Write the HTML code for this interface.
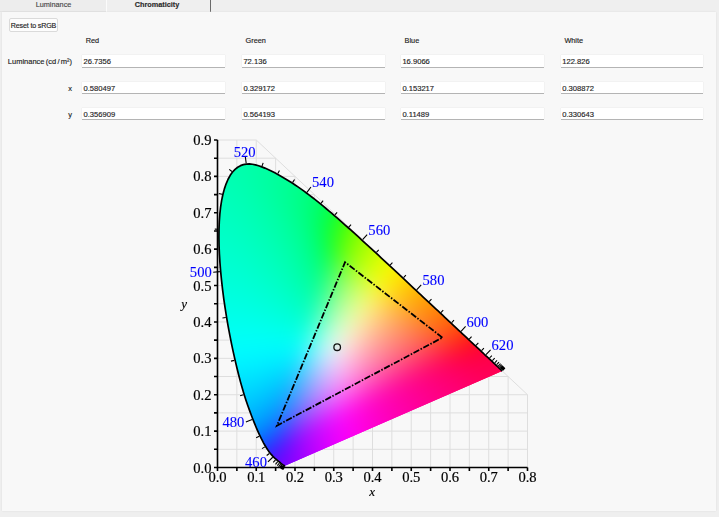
<!DOCTYPE html>
<html><head><meta charset="utf-8"><style>
html,body{margin:0;padding:0}
body{width:719px;height:517px;background:#efefef;overflow:hidden;position:relative;font-family:"Liberation Sans",sans-serif;color:#222}
.tab,.btn,.lbl,.inp,.rl{-webkit-text-stroke:0.15px currentColor}
.tabbar{position:absolute;left:0;top:0;width:719px;height:12px;background:#efefef}
.tab{position:absolute;top:0;height:11px;font-size:7.3px;line-height:10px;text-align:center;color:#4a4a4a;white-space:nowrap}
.t1{left:0;width:107px;border-bottom:1px solid #e3e3e3;background:#ededed}
.t2{left:106px;width:102px;font-weight:bold;color:#2a2a2a;height:12px;background:#efefef}
.sep{position:absolute;left:106px;top:0;width:1px;height:12px;background:#fbfbfb}
.dk{position:absolute;left:210px;top:0;width:1px;height:11.5px;background:#6a6a6a}
.panel{position:absolute;left:2px;top:12px;width:714px;height:498.6px;background:#f8f8f8;box-shadow:0 0 1.5px #d8d8d8}
.btn{position:absolute;left:9px;top:18.3px;width:47px;height:11.6px;border:1px solid #dadada;border-radius:2px;background:#fdfdfd;font-size:7.1px;line-height:14px;text-align:center;color:#1e1e1e;white-space:nowrap;letter-spacing:-0.15px}
.lbl{position:absolute;font-size:7.3px;line-height:9px;color:#1e1e1e;white-space:nowrap}
.inp{position:absolute;width:143.5px;height:11.5px;background:#fff;box-shadow:0 1px 0 #b4b4b4,0 0 1px #d4d4d4;font-size:7.6px;line-height:13.6px;text-indent:1.4px;color:#1e1e1e;white-space:nowrap}
.rl{position:absolute;font-size:7.5px;line-height:9px;color:#1e1e1e;text-align:right;width:72.1px;left:0;white-space:nowrap;word-spacing:-0.8px}
canvas{display:block}
</style></head><body>
<div class="tabbar"></div>
<div class="tab t1">Luminance</div>
<div class="tab t2">Chromaticity</div>
<div class="sep"></div>
<div class="dk"></div>
<div class="panel"></div>
<div class="btn">Reset to sRGB</div>
<div class="lbl" style="left:85.7px;top:36px">Red</div>
<div class="lbl" style="left:245.6px;top:36px">Green</div>
<div class="lbl" style="left:404.6px;top:36px">Blue</div>
<div class="lbl" style="left:564.4px;top:36px">White</div>
<div class="rl" style="top:56.5px">Luminance (cd / m&#178;)</div>
<div class="rl" style="top:83.5px">x</div>
<div class="rl" style="top:110px">y</div>
<div class="inp" style="left:82.1px;top:55.3px;width:143.4px">26.7356</div>
<div class="inp" style="left:82.1px;top:81.8px;width:143.4px">0.580497</div>
<div class="inp" style="left:82.1px;top:107.6px;width:143.4px">0.356909</div>
<div class="inp" style="left:242px;top:55.3px;width:142.5px">72.136</div>
<div class="inp" style="left:242px;top:81.8px;width:142.5px">0.329172</div>
<div class="inp" style="left:242px;top:107.6px;width:142.5px">0.564193</div>
<div class="inp" style="left:401px;top:55.3px;width:143.2px">16.9066</div>
<div class="inp" style="left:401px;top:81.8px;width:143.2px">0.153217</div>
<div class="inp" style="left:401px;top:107.6px;width:143.2px">0.11489</div>
<div class="inp" style="left:560.8px;top:55.3px;width:142.4px">122.826</div>
<div class="inp" style="left:560.8px;top:81.8px;width:142.4px">0.308872</div>
<div class="inp" style="left:560.8px;top:107.6px;width:142.4px">0.330643</div>
<svg width="719" height="517" viewBox="0 0 719 517" style="position:absolute;left:0;top:0">
<path d="M217.50,467.50V139.99M236.88,467.50V139.99M256.25,467.50V139.99M275.62,467.50V158.19M295.00,467.50V176.38M314.38,467.50V194.58M333.75,467.50V212.77M353.12,467.50V230.97M372.50,467.50V249.16M391.88,467.50V267.36M411.25,467.50V285.55M430.62,467.50V303.75M450.00,467.50V321.94M469.38,467.50V340.13M488.75,467.50V358.33M508.12,467.50V376.52M527.50,467.50V394.72M217.50,467.50H527.50M217.50,449.31H527.50M217.50,431.11H527.50M217.50,412.91H527.50M217.50,394.72H527.50M217.50,376.52H508.12M217.50,358.33H488.75M217.50,340.13H469.38M217.50,321.94H450.00M217.50,303.75H430.62M217.50,285.55H411.25M217.50,267.36H391.88M217.50,249.16H372.50M217.50,230.97H353.12M217.50,212.77H333.75M217.50,194.58H314.38M217.50,176.38H295.00M217.50,158.19H275.62M217.50,139.99H256.25M256.25,139.99L527.50,394.72" stroke="#dedede" stroke-width="1" fill="none"/>
<defs><clipPath id="lc"><path d="M284.97,465.69 L284.96,465.69 L284.95,465.69 L284.95,465.69 L284.94,465.69 L284.93,465.69 L284.91,465.69 L284.90,465.70 L284.88,465.71 L284.87,465.71 L284.85,465.71 L284.83,465.71 L284.81,465.70 L284.79,465.70 L284.77,465.70 L284.75,465.71 L284.74,465.72 L284.72,465.73 L284.70,465.74 L284.68,465.75 L284.67,465.75 L284.65,465.76 L284.63,465.76 L284.61,465.76 L284.58,465.76 L284.55,465.76 L284.51,465.76 L284.48,465.76 L284.44,465.75 L284.41,465.75 L284.37,465.75 L284.34,465.76 L284.30,465.75 L284.26,465.75 L284.22,465.75 L284.18,465.74 L284.14,465.73 L284.10,465.72 L284.05,465.70 L283.99,465.68 L283.92,465.64 L283.84,465.60 L283.76,465.56 L283.67,465.51 L283.58,465.45 L283.49,465.39 L283.39,465.33 L283.29,465.25 L283.18,465.17 L283.07,465.08 L282.94,464.99 L282.80,464.89 L282.66,464.77 L282.50,464.65 L282.34,464.52 L282.17,464.39 L282.00,464.24 L281.82,464.08 L281.62,463.91 L281.42,463.73 L281.21,463.55 L280.98,463.36 L280.74,463.16 L280.49,462.94 L280.22,462.72 L279.93,462.48 L279.62,462.23 L279.29,461.96 L278.95,461.67 L278.58,461.37 L278.20,461.06 L277.80,460.73 L277.38,460.38 L276.94,460.02 L276.48,459.64 L276.01,459.22 L275.51,458.78 L274.98,458.31 L274.43,457.81 L273.87,457.27 L273.28,456.69 L272.68,456.08 L272.06,455.41 L271.41,454.69 L270.73,453.89 L270.01,452.99 L269.23,451.96 L268.41,450.81 L267.52,449.51 L266.58,448.06 L265.60,446.47 L264.57,444.72 L263.50,442.82 L262.38,440.72 L261.20,438.43 L259.97,435.90 L258.68,433.12 L257.33,430.07 L255.91,426.74 L254.43,423.12 L252.88,419.21 L251.24,414.98 L249.54,410.42 L247.77,405.48 L245.96,400.17 L244.12,394.46 L242.30,388.36 L240.48,381.89 L238.68,375.03 L236.89,367.79 L235.09,360.16 L233.29,352.15 L231.53,343.81 L229.81,335.19 L228.15,326.34 L226.59,317.32 L225.14,308.20 L223.80,299.03 L222.61,289.84 L221.56,280.67 L220.67,271.57 L219.94,262.60 L219.39,253.85 L219.04,245.36 L218.91,237.15 L219.00,229.21 L219.30,221.54 L219.83,214.18 L220.60,207.19 L221.61,200.61 L222.87,194.51 L224.38,188.89 L226.12,183.79 L228.07,179.25 L230.22,175.32 L232.56,172.01 L235.06,169.32 L237.72,167.22 L240.49,165.67 L243.35,164.64 L246.29,164.08 L249.30,163.97 L252.35,164.27 L255.45,164.88 L258.58,165.76 L261.74,166.84 L264.91,168.09 L268.09,169.49 L271.25,171.00 L274.37,172.60 L277.45,174.25 L280.48,175.93 L283.47,177.65 L286.42,179.41 L289.34,181.21 L292.24,183.07 L295.12,184.97 L297.98,186.91 L300.82,188.90 L303.66,190.93 L306.48,193.00 L309.29,195.11 L312.10,197.26 L314.90,199.45 L317.70,201.67 L320.49,203.92 L323.27,206.20 L326.05,208.50 L328.83,210.84 L331.60,213.19 L334.37,215.57 L337.14,217.97 L339.92,220.39 L342.69,222.83 L345.46,225.28 L348.23,227.75 L351.00,230.23 L353.77,232.72 L356.54,235.23 L359.31,237.74 L362.08,240.26 L364.84,242.79 L367.61,245.32 L370.37,247.86 L373.13,250.40 L375.89,252.94 L378.64,255.49 L381.38,258.03 L384.12,260.57 L386.85,263.11 L389.57,265.64 L392.29,268.17 L394.99,270.69 L397.68,273.20 L400.36,275.71 L403.03,278.20 L405.67,280.68 L408.31,283.14 L410.92,285.59 L413.52,288.02 L416.09,290.43 L418.64,292.82 L421.17,295.18 L423.68,297.53 L426.15,299.84 L428.60,302.13 L431.02,304.39 L433.41,306.62 L435.77,308.82 L438.09,310.99 L440.37,313.12 L442.62,315.23 L444.83,317.30 L446.99,319.32 L449.09,321.30 L451.14,323.21 L453.11,325.07 L455.03,326.86 L456.89,328.60 L458.70,330.29 L460.48,331.95 L462.21,333.58 L463.91,335.16 L465.56,336.70 L467.16,338.19 L468.69,339.63 L470.16,341.00 L471.57,342.31 L472.93,343.57 L474.23,344.79 L475.48,345.95 L476.69,347.08 L477.85,348.16 L478.95,349.20 L480.02,350.19 L481.03,351.14 L482.00,352.05 L482.93,352.92 L483.81,353.75 L484.65,354.54 L485.46,355.29 L486.23,356.01 L486.96,356.70 L487.67,357.36 L488.34,357.98 L488.98,358.58 L489.60,359.16 L490.19,359.71 L490.75,360.23 L491.29,360.74 L491.82,361.23 L492.33,361.71 L492.82,362.17 L493.29,362.61 L493.75,363.04 L494.19,363.45 L494.61,363.84 L495.01,364.22 L495.40,364.59 L495.77,364.93 L496.13,365.27 L496.47,365.59 L496.79,365.89 L497.10,366.18 L497.40,366.46 L497.67,366.72 L497.93,366.96 L498.18,367.19 L498.40,367.40 L498.62,367.60 L498.82,367.79 L499.02,367.97 L499.20,368.15 L499.38,368.31 L499.55,368.47 L499.71,368.62 L499.85,368.76 L500.00,368.89 L500.13,369.01 L500.25,369.13 L500.36,369.24 L500.47,369.33 L500.56,369.42 L500.64,369.50 L500.72,369.57 L500.80,369.64 L500.87,369.71 L500.94,369.78 L501.01,369.85 L501.08,369.91 L501.15,369.97 L501.21,370.03 L501.27,370.08 L501.32,370.14 L501.38,370.19 L501.43,370.24 L501.48,370.29 L501.54,370.34 L501.59,370.39 L501.65,370.44 L501.70,370.49 L501.75,370.54 L501.80,370.59 L501.85,370.63 L501.90,370.68 L501.94,370.72 L501.98,370.75 L502.01,370.78 L502.04,370.81 L502.06,370.83 L502.08,370.84 L502.09,370.86 L502.11,370.88 L502.13,370.89 L502.14,370.91 L502.15,370.92 L502.17,370.93 L502.18,370.94 L502.19,370.95 L502.19,370.95 L502.19,370.95 Z"/></clipPath><filter id="bl" x="-5%" y="-5%" width="110%" height="110%"><feGaussianBlur stdDeviation="4"/></filter></defs><g clip-path="url(#lc)"><g filter="url(#bl)" shape-rendering="crispEdges"><rect x="232" y="144" width="8" height="8" fill="#00ffab"/><rect x="240" y="144" width="8" height="8" fill="#00ffa9"/><rect x="248" y="144" width="8" height="8" fill="#00ffa7"/><rect x="256" y="144" width="8" height="8" fill="#00ffa4"/><rect x="224" y="152" width="8" height="8" fill="#00ffae"/><rect x="232" y="152" width="8" height="8" fill="#00ffac"/><rect x="240" y="152" width="8" height="8" fill="#00ffaa"/><rect x="248" y="152" width="8" height="8" fill="#00ffa7"/><rect x="256" y="152" width="8" height="8" fill="#00ffa4"/><rect x="264" y="152" width="8" height="8" fill="#00ffa1"/><rect x="272" y="152" width="8" height="8" fill="#00ff9e"/><rect x="216" y="160" width="8" height="8" fill="#00ffb1"/><rect x="224" y="160" width="8" height="8" fill="#00ffb0"/><rect x="232" y="160" width="8" height="8" fill="#00ffad"/><rect x="240" y="160" width="8" height="8" fill="#00ffab"/><rect x="248" y="160" width="8" height="8" fill="#00ffa8"/><rect x="256" y="160" width="8" height="8" fill="#00ffa5"/><rect x="264" y="160" width="8" height="8" fill="#00ffa1"/><rect x="272" y="160" width="8" height="8" fill="#00ff9d"/><rect x="280" y="160" width="8" height="8" fill="#00ff98"/><rect x="288" y="160" width="8" height="8" fill="#00ff94"/><rect x="208" y="168" width="8" height="8" fill="#00ffb5"/><rect x="216" y="168" width="8" height="8" fill="#00ffb3"/><rect x="224" y="168" width="8" height="8" fill="#00ffb1"/><rect x="232" y="168" width="8" height="8" fill="#00ffaf"/><rect x="240" y="168" width="8" height="8" fill="#00ffac"/><rect x="248" y="168" width="8" height="8" fill="#00ffa9"/><rect x="256" y="168" width="8" height="8" fill="#00ffa5"/><rect x="264" y="168" width="8" height="8" fill="#00ffa1"/><rect x="272" y="168" width="8" height="8" fill="#00ff9d"/><rect x="280" y="168" width="8" height="8" fill="#00ff97"/><rect x="288" y="168" width="8" height="8" fill="#00ff92"/><rect x="296" y="168" width="8" height="8" fill="#00ff8d"/><rect x="208" y="176" width="8" height="8" fill="#00ffb7"/><rect x="216" y="176" width="8" height="8" fill="#00ffb5"/><rect x="224" y="176" width="8" height="8" fill="#00ffb3"/><rect x="232" y="176" width="8" height="8" fill="#00ffb1"/><rect x="240" y="176" width="8" height="8" fill="#00ffae"/><rect x="248" y="176" width="8" height="8" fill="#00ffaa"/><rect x="256" y="176" width="8" height="8" fill="#00ffa6"/><rect x="264" y="176" width="8" height="8" fill="#00ffa1"/><rect x="272" y="176" width="8" height="8" fill="#00ff9c"/><rect x="280" y="176" width="8" height="8" fill="#00ff97"/><rect x="288" y="176" width="8" height="8" fill="#00ff92"/><rect x="296" y="176" width="8" height="8" fill="#00ff8a"/><rect x="304" y="176" width="8" height="8" fill="#00ff84"/><rect x="312" y="176" width="8" height="8" fill="#00ff7c"/><rect x="208" y="184" width="8" height="8" fill="#00ffb9"/><rect x="216" y="184" width="8" height="8" fill="#00ffb8"/><rect x="224" y="184" width="8" height="8" fill="#00ffb6"/><rect x="232" y="184" width="8" height="8" fill="#00ffb3"/><rect x="240" y="184" width="8" height="8" fill="#00ffb0"/><rect x="248" y="184" width="8" height="8" fill="#00ffac"/><rect x="256" y="184" width="8" height="8" fill="#00ffa7"/><rect x="264" y="184" width="8" height="8" fill="#00ffa2"/><rect x="272" y="184" width="8" height="8" fill="#00ff9d"/><rect x="280" y="184" width="8" height="8" fill="#00ff96"/><rect x="288" y="184" width="8" height="8" fill="#00ff90"/><rect x="296" y="184" width="8" height="8" fill="#00ff89"/><rect x="304" y="184" width="8" height="8" fill="#00ff81"/><rect x="312" y="184" width="8" height="8" fill="#00ff77"/><rect x="320" y="184" width="8" height="8" fill="#00ff6c"/><rect x="208" y="192" width="8" height="8" fill="#00ffbb"/><rect x="216" y="192" width="8" height="8" fill="#00ffba"/><rect x="224" y="192" width="8" height="8" fill="#00ffb8"/><rect x="232" y="192" width="8" height="8" fill="#00ffb6"/><rect x="240" y="192" width="8" height="8" fill="#00ffb3"/><rect x="248" y="192" width="8" height="8" fill="#00ffae"/><rect x="256" y="192" width="8" height="8" fill="#00ffaa"/><rect x="264" y="192" width="8" height="8" fill="#00ffa4"/><rect x="272" y="192" width="8" height="8" fill="#00ff9e"/><rect x="280" y="192" width="8" height="8" fill="#00ff97"/><rect x="288" y="192" width="8" height="8" fill="#00ff90"/><rect x="296" y="192" width="8" height="8" fill="#00ff87"/><rect x="304" y="192" width="8" height="8" fill="#00ff7e"/><rect x="312" y="192" width="8" height="8" fill="#00ff75"/><rect x="320" y="192" width="8" height="8" fill="#01ff65"/><rect x="328" y="192" width="8" height="8" fill="#05ff53"/><rect x="208" y="200" width="8" height="8" fill="#00ffbe"/><rect x="216" y="200" width="8" height="8" fill="#00ffbc"/><rect x="224" y="200" width="8" height="8" fill="#00ffbb"/><rect x="232" y="200" width="8" height="8" fill="#00ffb8"/><rect x="240" y="200" width="8" height="8" fill="#00ffb5"/><rect x="248" y="200" width="8" height="8" fill="#00ffb1"/><rect x="256" y="200" width="8" height="8" fill="#00ffac"/><rect x="264" y="200" width="8" height="8" fill="#00ffa7"/><rect x="272" y="200" width="8" height="8" fill="#00ffa0"/><rect x="280" y="200" width="8" height="8" fill="#00ff99"/><rect x="288" y="200" width="8" height="8" fill="#00ff91"/><rect x="296" y="200" width="8" height="8" fill="#00ff87"/><rect x="304" y="200" width="8" height="8" fill="#00ff7c"/><rect x="312" y="200" width="8" height="8" fill="#01ff6f"/><rect x="320" y="200" width="8" height="8" fill="#02ff60"/><rect x="328" y="200" width="8" height="8" fill="#09ff48"/><rect x="336" y="200" width="8" height="8" fill="#16ff32"/><rect x="208" y="208" width="8" height="8" fill="#00ffc0"/><rect x="216" y="208" width="8" height="8" fill="#00ffbf"/><rect x="224" y="208" width="8" height="8" fill="#00ffbe"/><rect x="232" y="208" width="8" height="8" fill="#00ffbb"/><rect x="240" y="208" width="8" height="8" fill="#00ffb8"/><rect x="248" y="208" width="8" height="8" fill="#00ffb4"/><rect x="256" y="208" width="8" height="8" fill="#00ffaf"/><rect x="264" y="208" width="8" height="8" fill="#00ffaa"/><rect x="272" y="208" width="8" height="8" fill="#00ffa3"/><rect x="280" y="208" width="8" height="8" fill="#00ff9c"/><rect x="288" y="208" width="8" height="8" fill="#00ff93"/><rect x="296" y="208" width="8" height="8" fill="#00ff88"/><rect x="304" y="208" width="8" height="8" fill="#00ff7b"/><rect x="312" y="208" width="8" height="8" fill="#01ff6b"/><rect x="320" y="208" width="8" height="8" fill="#05ff56"/><rect x="328" y="208" width="8" height="8" fill="#0eff41"/><rect x="336" y="208" width="8" height="8" fill="#21ff26"/><rect x="344" y="208" width="8" height="8" fill="#39ff14"/><rect x="208" y="216" width="8" height="8" fill="#00ffc3"/><rect x="216" y="216" width="8" height="8" fill="#00ffc2"/><rect x="224" y="216" width="8" height="8" fill="#00ffc0"/><rect x="232" y="216" width="8" height="8" fill="#00ffbe"/><rect x="240" y="216" width="8" height="8" fill="#00ffbb"/><rect x="248" y="216" width="8" height="8" fill="#00ffb7"/><rect x="256" y="216" width="8" height="8" fill="#00ffb2"/><rect x="264" y="216" width="8" height="8" fill="#00ffad"/><rect x="272" y="216" width="8" height="8" fill="#00ffa6"/><rect x="280" y="216" width="8" height="8" fill="#00ff9f"/><rect x="288" y="216" width="8" height="8" fill="#00ff96"/><rect x="296" y="216" width="8" height="8" fill="#00ff8b"/><rect x="304" y="216" width="8" height="8" fill="#00ff7c"/><rect x="312" y="216" width="8" height="8" fill="#02ff69"/><rect x="320" y="216" width="8" height="8" fill="#09ff51"/><rect x="328" y="216" width="8" height="8" fill="#17ff36"/><rect x="336" y="216" width="8" height="8" fill="#2bff21"/><rect x="344" y="216" width="8" height="8" fill="#49ff0d"/><rect x="352" y="216" width="8" height="8" fill="#64ff05"/><rect x="360" y="216" width="8" height="8" fill="#7bff01"/><rect x="208" y="224" width="8" height="8" fill="#00ffc6"/><rect x="216" y="224" width="8" height="8" fill="#00ffc4"/><rect x="224" y="224" width="8" height="8" fill="#00ffc3"/><rect x="232" y="224" width="8" height="8" fill="#00ffc1"/><rect x="240" y="224" width="8" height="8" fill="#00ffbe"/><rect x="248" y="224" width="8" height="8" fill="#00ffba"/><rect x="256" y="224" width="8" height="8" fill="#00ffb5"/><rect x="264" y="224" width="8" height="8" fill="#00ffb0"/><rect x="272" y="224" width="8" height="8" fill="#00ffaa"/><rect x="280" y="224" width="8" height="8" fill="#00ffa2"/><rect x="288" y="224" width="8" height="8" fill="#00ff99"/><rect x="296" y="224" width="8" height="8" fill="#00ff8e"/><rect x="304" y="224" width="8" height="8" fill="#01ff7f"/><rect x="312" y="224" width="8" height="8" fill="#03ff6a"/><rect x="320" y="224" width="8" height="8" fill="#0cff4f"/><rect x="328" y="224" width="8" height="8" fill="#1eff31"/><rect x="336" y="224" width="8" height="8" fill="#39ff19"/><rect x="344" y="224" width="8" height="8" fill="#54ff0b"/><rect x="352" y="224" width="8" height="8" fill="#72ff03"/><rect x="360" y="224" width="8" height="8" fill="#89ff01"/><rect x="368" y="224" width="8" height="8" fill="#9bff00"/><rect x="208" y="232" width="8" height="8" fill="#00ffc8"/><rect x="216" y="232" width="8" height="8" fill="#00ffc7"/><rect x="224" y="232" width="8" height="8" fill="#00ffc6"/><rect x="232" y="232" width="8" height="8" fill="#00ffc4"/><rect x="240" y="232" width="8" height="8" fill="#00ffc1"/><rect x="248" y="232" width="8" height="8" fill="#00ffbd"/><rect x="256" y="232" width="8" height="8" fill="#00ffb8"/><rect x="264" y="232" width="8" height="8" fill="#00ffb3"/><rect x="272" y="232" width="8" height="8" fill="#00ffad"/><rect x="280" y="232" width="8" height="8" fill="#00ffa6"/><rect x="288" y="232" width="8" height="8" fill="#00ff9d"/><rect x="296" y="232" width="8" height="8" fill="#00ff91"/><rect x="304" y="232" width="8" height="8" fill="#01ff82"/><rect x="312" y="232" width="8" height="8" fill="#04ff6c"/><rect x="320" y="232" width="8" height="8" fill="#0eff50"/><rect x="328" y="232" width="8" height="8" fill="#23ff31"/><rect x="336" y="232" width="8" height="8" fill="#42ff18"/><rect x="344" y="232" width="8" height="8" fill="#62ff09"/><rect x="352" y="232" width="8" height="8" fill="#7dff03"/><rect x="360" y="232" width="8" height="8" fill="#91ff02"/><rect x="368" y="232" width="8" height="8" fill="#a7ff00"/><rect x="376" y="232" width="8" height="8" fill="#b8ff00"/><rect x="208" y="240" width="8" height="8" fill="#00ffcb"/><rect x="216" y="240" width="8" height="8" fill="#00ffca"/><rect x="224" y="240" width="8" height="8" fill="#00ffc9"/><rect x="232" y="240" width="8" height="8" fill="#00ffc7"/><rect x="240" y="240" width="8" height="8" fill="#00ffc4"/><rect x="248" y="240" width="8" height="8" fill="#00ffc0"/><rect x="256" y="240" width="8" height="8" fill="#00ffbc"/><rect x="264" y="240" width="8" height="8" fill="#00ffb7"/><rect x="272" y="240" width="8" height="8" fill="#00ffb1"/><rect x="280" y="240" width="8" height="8" fill="#00ffaa"/><rect x="288" y="240" width="8" height="8" fill="#00ffa1"/><rect x="296" y="240" width="8" height="8" fill="#00ff96"/><rect x="304" y="240" width="8" height="8" fill="#01ff86"/><rect x="312" y="240" width="8" height="8" fill="#04ff71"/><rect x="320" y="240" width="8" height="8" fill="#10ff54"/><rect x="328" y="240" width="8" height="8" fill="#28ff35"/><rect x="336" y="240" width="8" height="8" fill="#49ff1b"/><rect x="344" y="240" width="8" height="8" fill="#6cff0b"/><rect x="352" y="240" width="8" height="8" fill="#89ff04"/><rect x="360" y="240" width="8" height="8" fill="#a0ff02"/><rect x="368" y="240" width="8" height="8" fill="#b0ff02"/><rect x="376" y="240" width="8" height="8" fill="#c3ff00"/><rect x="384" y="240" width="8" height="8" fill="#d2fe00"/><rect x="208" y="248" width="8" height="8" fill="#00ffce"/><rect x="216" y="248" width="8" height="8" fill="#00ffcd"/><rect x="224" y="248" width="8" height="8" fill="#00ffcc"/><rect x="232" y="248" width="8" height="8" fill="#00ffca"/><rect x="240" y="248" width="8" height="8" fill="#00ffc7"/><rect x="248" y="248" width="8" height="8" fill="#00ffc3"/><rect x="256" y="248" width="8" height="8" fill="#00ffbf"/><rect x="264" y="248" width="8" height="8" fill="#00ffba"/><rect x="272" y="248" width="8" height="8" fill="#00ffb5"/><rect x="280" y="248" width="8" height="8" fill="#00ffae"/><rect x="288" y="248" width="8" height="8" fill="#00ffa5"/><rect x="296" y="248" width="8" height="8" fill="#00ff9a"/><rect x="304" y="248" width="8" height="8" fill="#01ff8b"/><rect x="312" y="248" width="8" height="8" fill="#05ff76"/><rect x="320" y="248" width="8" height="8" fill="#13ff5b"/><rect x="328" y="248" width="8" height="8" fill="#2dff3d"/><rect x="336" y="248" width="8" height="8" fill="#50ff24"/><rect x="344" y="248" width="8" height="8" fill="#75ff13"/><rect x="352" y="248" width="8" height="8" fill="#93ff09"/><rect x="360" y="248" width="8" height="8" fill="#aaff05"/><rect x="368" y="248" width="8" height="8" fill="#bdff03"/><rect x="376" y="248" width="8" height="8" fill="#cdff02"/><rect x="384" y="248" width="8" height="8" fill="#ddfd01"/><rect x="392" y="248" width="8" height="8" fill="#e9fb00"/><rect x="208" y="256" width="8" height="8" fill="#00ffd1"/><rect x="216" y="256" width="8" height="8" fill="#00ffd0"/><rect x="224" y="256" width="8" height="8" fill="#00ffcf"/><rect x="232" y="256" width="8" height="8" fill="#00ffcd"/><rect x="240" y="256" width="8" height="8" fill="#00ffca"/><rect x="248" y="256" width="8" height="8" fill="#00ffc7"/><rect x="256" y="256" width="8" height="8" fill="#00ffc3"/><rect x="264" y="256" width="8" height="8" fill="#00ffbe"/><rect x="272" y="256" width="8" height="8" fill="#00ffb9"/><rect x="280" y="256" width="8" height="8" fill="#00ffb2"/><rect x="288" y="256" width="8" height="8" fill="#00ffaa"/><rect x="296" y="256" width="8" height="8" fill="#00ff9f"/><rect x="304" y="256" width="8" height="8" fill="#02ff90"/><rect x="312" y="256" width="8" height="8" fill="#08ff7d"/><rect x="320" y="256" width="8" height="8" fill="#17ff65"/><rect x="328" y="256" width="8" height="8" fill="#34ff4a"/><rect x="336" y="256" width="8" height="8" fill="#59ff33"/><rect x="344" y="256" width="8" height="8" fill="#7eff21"/><rect x="352" y="256" width="8" height="8" fill="#9cff14"/><rect x="360" y="256" width="8" height="8" fill="#b4ff0c"/><rect x="368" y="256" width="8" height="8" fill="#c8ff06"/><rect x="376" y="256" width="8" height="8" fill="#d9fe04"/><rect x="384" y="256" width="8" height="8" fill="#e6fc03"/><rect x="392" y="256" width="8" height="8" fill="#f1f701"/><rect x="400" y="256" width="8" height="8" fill="#f8f000"/><rect x="208" y="264" width="8" height="8" fill="#00ffd4"/><rect x="216" y="264" width="8" height="8" fill="#00ffd3"/><rect x="224" y="264" width="8" height="8" fill="#00ffd2"/><rect x="232" y="264" width="8" height="8" fill="#00ffd0"/><rect x="240" y="264" width="8" height="8" fill="#00ffce"/><rect x="248" y="264" width="8" height="8" fill="#00ffcb"/><rect x="256" y="264" width="8" height="8" fill="#00ffc7"/><rect x="264" y="264" width="8" height="8" fill="#00ffc2"/><rect x="272" y="264" width="8" height="8" fill="#00ffbd"/><rect x="280" y="264" width="8" height="8" fill="#00ffb6"/><rect x="288" y="264" width="8" height="8" fill="#00ffae"/><rect x="296" y="264" width="8" height="8" fill="#00ffa4"/><rect x="304" y="264" width="8" height="8" fill="#03ff96"/><rect x="312" y="264" width="8" height="8" fill="#0bff84"/><rect x="320" y="264" width="8" height="8" fill="#1eff70"/><rect x="328" y="264" width="8" height="8" fill="#3eff5a"/><rect x="336" y="264" width="8" height="8" fill="#65ff46"/><rect x="344" y="264" width="8" height="8" fill="#88ff34"/><rect x="352" y="264" width="8" height="8" fill="#a6ff25"/><rect x="360" y="264" width="8" height="8" fill="#beff19"/><rect x="368" y="264" width="8" height="8" fill="#d2fe0f"/><rect x="376" y="264" width="8" height="8" fill="#e3fc09"/><rect x="384" y="264" width="8" height="8" fill="#eff705"/><rect x="392" y="264" width="8" height="8" fill="#f7f104"/><rect x="400" y="264" width="8" height="8" fill="#fce701"/><rect x="408" y="264" width="8" height="8" fill="#fedc01"/><rect x="208" y="272" width="8" height="8" fill="#00ffd7"/><rect x="216" y="272" width="8" height="8" fill="#00ffd6"/><rect x="224" y="272" width="8" height="8" fill="#00ffd6"/><rect x="232" y="272" width="8" height="8" fill="#00ffd4"/><rect x="240" y="272" width="8" height="8" fill="#00ffd2"/><rect x="248" y="272" width="8" height="8" fill="#00ffcf"/><rect x="256" y="272" width="8" height="8" fill="#00ffcb"/><rect x="264" y="272" width="8" height="8" fill="#00ffc7"/><rect x="272" y="272" width="8" height="8" fill="#00ffc2"/><rect x="280" y="272" width="8" height="8" fill="#00ffbb"/><rect x="288" y="272" width="8" height="8" fill="#00ffb4"/><rect x="296" y="272" width="8" height="8" fill="#01ffa9"/><rect x="304" y="272" width="8" height="8" fill="#04ff9c"/><rect x="312" y="272" width="8" height="8" fill="#0fff8d"/><rect x="320" y="272" width="8" height="8" fill="#27ff7b"/><rect x="328" y="272" width="8" height="8" fill="#4bff6a"/><rect x="336" y="272" width="8" height="8" fill="#71ff5a"/><rect x="344" y="272" width="8" height="8" fill="#94ff4b"/><rect x="352" y="272" width="8" height="8" fill="#b1ff3c"/><rect x="360" y="272" width="8" height="8" fill="#c8fe2c"/><rect x="368" y="272" width="8" height="8" fill="#dcfc1e"/><rect x="376" y="272" width="8" height="8" fill="#ebf813"/><rect x="384" y="272" width="8" height="8" fill="#f5f20b"/><rect x="392" y="272" width="8" height="8" fill="#fbe806"/><rect x="400" y="272" width="8" height="8" fill="#fede05"/><rect x="408" y="272" width="8" height="8" fill="#ffd202"/><rect x="416" y="272" width="8" height="8" fill="#ffc701"/><rect x="208" y="280" width="8" height="8" fill="#00ffda"/><rect x="216" y="280" width="8" height="8" fill="#00ffda"/><rect x="224" y="280" width="8" height="8" fill="#00ffd9"/><rect x="232" y="280" width="8" height="8" fill="#00ffd8"/><rect x="240" y="280" width="8" height="8" fill="#00ffd6"/><rect x="248" y="280" width="8" height="8" fill="#00ffd3"/><rect x="256" y="280" width="8" height="8" fill="#00ffcf"/><rect x="264" y="280" width="8" height="8" fill="#00ffcb"/><rect x="272" y="280" width="8" height="8" fill="#00ffc7"/><rect x="280" y="280" width="8" height="8" fill="#00ffc1"/><rect x="288" y="280" width="8" height="8" fill="#00ffb9"/><rect x="296" y="280" width="8" height="8" fill="#01ffb0"/><rect x="304" y="280" width="8" height="8" fill="#07ffa3"/><rect x="312" y="280" width="8" height="8" fill="#16ff95"/><rect x="320" y="280" width="8" height="8" fill="#32ff87"/><rect x="328" y="280" width="8" height="8" fill="#58ff79"/><rect x="336" y="280" width="8" height="8" fill="#7fff6e"/><rect x="344" y="280" width="8" height="8" fill="#a1ff61"/><rect x="352" y="280" width="8" height="8" fill="#bcfe54"/><rect x="360" y="280" width="8" height="8" fill="#d3fd44"/><rect x="368" y="280" width="8" height="8" fill="#e5fa33"/><rect x="376" y="280" width="8" height="8" fill="#f2f323"/><rect x="384" y="280" width="8" height="8" fill="#f9ea16"/><rect x="392" y="280" width="8" height="8" fill="#fdde0d"/><rect x="400" y="280" width="8" height="8" fill="#fed208"/><rect x="408" y="280" width="8" height="8" fill="#ffc706"/><rect x="416" y="280" width="8" height="8" fill="#ffbc02"/><rect x="424" y="280" width="8" height="8" fill="#ffb201"/><rect x="208" y="288" width="8" height="8" fill="#00ffde"/><rect x="216" y="288" width="8" height="8" fill="#00ffdd"/><rect x="224" y="288" width="8" height="8" fill="#00ffdd"/><rect x="232" y="288" width="8" height="8" fill="#00ffdc"/><rect x="240" y="288" width="8" height="8" fill="#00ffda"/><rect x="248" y="288" width="8" height="8" fill="#00ffd7"/><rect x="256" y="288" width="8" height="8" fill="#00ffd4"/><rect x="264" y="288" width="8" height="8" fill="#00ffd0"/><rect x="272" y="288" width="8" height="8" fill="#00ffcc"/><rect x="280" y="288" width="8" height="8" fill="#00ffc6"/><rect x="288" y="288" width="8" height="8" fill="#00ffbf"/><rect x="296" y="288" width="8" height="8" fill="#02ffb6"/><rect x="304" y="288" width="8" height="8" fill="#0affab"/><rect x="312" y="288" width="8" height="8" fill="#1dff9f"/><rect x="320" y="288" width="8" height="8" fill="#3eff93"/><rect x="328" y="288" width="8" height="8" fill="#67ff88"/><rect x="336" y="288" width="8" height="8" fill="#8dff7f"/><rect x="344" y="288" width="8" height="8" fill="#adff76"/><rect x="352" y="288" width="8" height="8" fill="#c8fe6a"/><rect x="360" y="288" width="8" height="8" fill="#ddfb5c"/><rect x="368" y="288" width="8" height="8" fill="#edf54b"/><rect x="376" y="288" width="8" height="8" fill="#f7ec39"/><rect x="384" y="288" width="8" height="8" fill="#fce027"/><rect x="392" y="288" width="8" height="8" fill="#fed319"/><rect x="400" y="288" width="8" height="8" fill="#ffc70f"/><rect x="408" y="288" width="8" height="8" fill="#ffbc09"/><rect x="416" y="288" width="8" height="8" fill="#ffb107"/><rect x="424" y="288" width="8" height="8" fill="#ffa703"/><rect x="432" y="288" width="8" height="8" fill="#ff9d02"/><rect x="208" y="296" width="8" height="8" fill="#00ffe1"/><rect x="216" y="296" width="8" height="8" fill="#00ffdf"/><rect x="224" y="296" width="8" height="8" fill="#00ffe1"/><rect x="232" y="296" width="8" height="8" fill="#00ffe0"/><rect x="240" y="296" width="8" height="8" fill="#00ffde"/><rect x="248" y="296" width="8" height="8" fill="#00ffdc"/><rect x="256" y="296" width="8" height="8" fill="#00ffd9"/><rect x="264" y="296" width="8" height="8" fill="#00ffd6"/><rect x="272" y="296" width="8" height="8" fill="#00ffd1"/><rect x="280" y="296" width="8" height="8" fill="#00ffcc"/><rect x="288" y="296" width="8" height="8" fill="#01ffc6"/><rect x="296" y="296" width="8" height="8" fill="#04ffbe"/><rect x="304" y="296" width="8" height="8" fill="#0fffb4"/><rect x="312" y="296" width="8" height="8" fill="#27ffa9"/><rect x="320" y="296" width="8" height="8" fill="#4cff9f"/><rect x="328" y="296" width="8" height="8" fill="#76ff97"/><rect x="336" y="296" width="8" height="8" fill="#9cff90"/><rect x="344" y="296" width="8" height="8" fill="#bbfe88"/><rect x="352" y="296" width="8" height="8" fill="#d4fc7f"/><rect x="360" y="296" width="8" height="8" fill="#e7f772"/><rect x="368" y="296" width="8" height="8" fill="#f3ef62"/><rect x="376" y="296" width="8" height="8" fill="#fbe34f"/><rect x="384" y="296" width="8" height="8" fill="#fed53c"/><rect x="392" y="296" width="8" height="8" fill="#ffc82a"/><rect x="400" y="296" width="8" height="8" fill="#ffbc1c"/><rect x="408" y="296" width="8" height="8" fill="#ffb011"/><rect x="416" y="296" width="8" height="8" fill="#ffa60b"/><rect x="424" y="296" width="8" height="8" fill="#ff9c08"/><rect x="432" y="296" width="8" height="8" fill="#ff9304"/><rect x="440" y="296" width="8" height="8" fill="#ff8a02"/><rect x="208" y="304" width="8" height="8" fill="#00ffe5"/><rect x="216" y="304" width="8" height="8" fill="#00ffe5"/><rect x="224" y="304" width="8" height="8" fill="#00ffe5"/><rect x="232" y="304" width="8" height="8" fill="#00ffe4"/><rect x="240" y="304" width="8" height="8" fill="#00ffe3"/><rect x="248" y="304" width="8" height="8" fill="#00ffe1"/><rect x="256" y="304" width="8" height="8" fill="#00ffde"/><rect x="264" y="304" width="8" height="8" fill="#00ffdb"/><rect x="272" y="304" width="8" height="8" fill="#00ffd8"/><rect x="280" y="304" width="8" height="8" fill="#00ffd3"/><rect x="288" y="304" width="8" height="8" fill="#01ffcd"/><rect x="296" y="304" width="8" height="8" fill="#06ffc6"/><rect x="304" y="304" width="8" height="8" fill="#15ffbd"/><rect x="312" y="304" width="8" height="8" fill="#32ffb4"/><rect x="320" y="304" width="8" height="8" fill="#5bffad"/><rect x="328" y="304" width="8" height="8" fill="#85ffa7"/><rect x="336" y="304" width="8" height="8" fill="#aafea1"/><rect x="344" y="304" width="8" height="8" fill="#c8fd9a"/><rect x="352" y="304" width="8" height="8" fill="#dff990"/><rect x="360" y="304" width="8" height="8" fill="#eff184"/><rect x="368" y="304" width="8" height="8" fill="#f8e674"/><rect x="376" y="304" width="8" height="8" fill="#fdd862"/><rect x="384" y="304" width="8" height="8" fill="#feca50"/><rect x="392" y="304" width="8" height="8" fill="#ffbc3d"/><rect x="400" y="304" width="8" height="8" fill="#ffb02c"/><rect x="408" y="304" width="8" height="8" fill="#ffa51e"/><rect x="416" y="304" width="8" height="8" fill="#ff9b14"/><rect x="424" y="304" width="8" height="8" fill="#ff910c"/><rect x="432" y="304" width="8" height="8" fill="#ff870a"/><rect x="440" y="304" width="8" height="8" fill="#ff7f05"/><rect x="448" y="304" width="8" height="8" fill="#ff7503"/><rect x="208" y="312" width="8" height="8" fill="#00ffe9"/><rect x="216" y="312" width="8" height="8" fill="#00ffe9"/><rect x="224" y="312" width="8" height="8" fill="#00ffe9"/><rect x="232" y="312" width="8" height="8" fill="#00ffe9"/><rect x="240" y="312" width="8" height="8" fill="#00ffe8"/><rect x="248" y="312" width="8" height="8" fill="#00ffe6"/><rect x="256" y="312" width="8" height="8" fill="#00ffe4"/><rect x="264" y="312" width="8" height="8" fill="#00ffe1"/><rect x="272" y="312" width="8" height="8" fill="#00ffde"/><rect x="280" y="312" width="8" height="8" fill="#00ffda"/><rect x="288" y="312" width="8" height="8" fill="#02ffd5"/><rect x="296" y="312" width="8" height="8" fill="#0affcf"/><rect x="304" y="312" width="8" height="8" fill="#1dffc8"/><rect x="312" y="312" width="8" height="8" fill="#3fffc1"/><rect x="320" y="312" width="8" height="8" fill="#6bffbb"/><rect x="328" y="312" width="8" height="8" fill="#95ffb6"/><rect x="336" y="312" width="8" height="8" fill="#b9feb1"/><rect x="344" y="312" width="8" height="8" fill="#d4fbaa"/><rect x="352" y="312" width="8" height="8" fill="#e8f4a0"/><rect x="360" y="312" width="8" height="8" fill="#f5e993"/><rect x="368" y="312" width="8" height="8" fill="#fbdb83"/><rect x="376" y="312" width="8" height="8" fill="#fecc72"/><rect x="384" y="312" width="8" height="8" fill="#ffbe61"/><rect x="392" y="312" width="8" height="8" fill="#ffb04f"/><rect x="400" y="312" width="8" height="8" fill="#ffa43e"/><rect x="408" y="312" width="8" height="8" fill="#ff992e"/><rect x="416" y="312" width="8" height="8" fill="#ff8f21"/><rect x="424" y="312" width="8" height="8" fill="#ff8616"/><rect x="432" y="312" width="8" height="8" fill="#ff7d0e"/><rect x="440" y="312" width="8" height="8" fill="#ff730b"/><rect x="448" y="312" width="8" height="8" fill="#ff6a06"/><rect x="456" y="312" width="8" height="8" fill="#ff5f04"/><rect x="208" y="320" width="8" height="8" fill="#00ffed"/><rect x="216" y="320" width="8" height="8" fill="#00ffee"/><rect x="224" y="320" width="8" height="8" fill="#00ffee"/><rect x="232" y="320" width="8" height="8" fill="#00ffed"/><rect x="240" y="320" width="8" height="8" fill="#00ffed"/><rect x="248" y="320" width="8" height="8" fill="#00ffec"/><rect x="256" y="320" width="8" height="8" fill="#00ffea"/><rect x="264" y="320" width="8" height="8" fill="#00ffe8"/><rect x="272" y="320" width="8" height="8" fill="#00ffe5"/><rect x="280" y="320" width="8" height="8" fill="#01ffe2"/><rect x="288" y="320" width="8" height="8" fill="#04ffde"/><rect x="296" y="320" width="8" height="8" fill="#0effd9"/><rect x="304" y="320" width="8" height="8" fill="#27ffd4"/><rect x="312" y="320" width="8" height="8" fill="#4effcf"/><rect x="320" y="320" width="8" height="8" fill="#7cffca"/><rect x="328" y="320" width="8" height="8" fill="#a6fec6"/><rect x="336" y="320" width="8" height="8" fill="#c7fcc1"/><rect x="344" y="320" width="8" height="8" fill="#e0f6b9"/><rect x="352" y="320" width="8" height="8" fill="#f0edad"/><rect x="360" y="320" width="8" height="8" fill="#f9df9f"/><rect x="368" y="320" width="8" height="8" fill="#fdcf8e"/><rect x="376" y="320" width="8" height="8" fill="#ffc07e"/><rect x="384" y="320" width="8" height="8" fill="#ffb16e"/><rect x="392" y="320" width="8" height="8" fill="#ffa45e"/><rect x="400" y="320" width="8" height="8" fill="#ff984f"/><rect x="408" y="320" width="8" height="8" fill="#ff8d3f"/><rect x="416" y="320" width="8" height="8" fill="#ff8330"/><rect x="424" y="320" width="8" height="8" fill="#ff7a23"/><rect x="432" y="320" width="8" height="8" fill="#ff7019"/><rect x="440" y="320" width="8" height="8" fill="#ff6711"/><rect x="448" y="320" width="8" height="8" fill="#ff5b0d"/><rect x="456" y="320" width="8" height="8" fill="#ff5108"/><rect x="464" y="320" width="8" height="8" fill="#ff4507"/><rect x="472" y="320" width="8" height="8" fill="#ff3708"/><rect x="208" y="328" width="8" height="8" fill="#00fff2"/><rect x="216" y="328" width="8" height="8" fill="#00fff2"/><rect x="224" y="328" width="8" height="8" fill="#00fff2"/><rect x="232" y="328" width="8" height="8" fill="#00fff2"/><rect x="240" y="328" width="8" height="8" fill="#00fff2"/><rect x="248" y="328" width="8" height="8" fill="#00fff1"/><rect x="256" y="328" width="8" height="8" fill="#00fff0"/><rect x="264" y="328" width="8" height="8" fill="#00ffef"/><rect x="272" y="328" width="8" height="8" fill="#00feed"/><rect x="280" y="328" width="8" height="8" fill="#01feeb"/><rect x="288" y="328" width="8" height="8" fill="#06fee8"/><rect x="296" y="328" width="8" height="8" fill="#14fee4"/><rect x="304" y="328" width="8" height="8" fill="#33fee0"/><rect x="312" y="328" width="8" height="8" fill="#5efedd"/><rect x="320" y="328" width="8" height="8" fill="#8dfeda"/><rect x="328" y="328" width="8" height="8" fill="#b6fcd6"/><rect x="336" y="328" width="8" height="8" fill="#d4f8d0"/><rect x="344" y="328" width="8" height="8" fill="#eaf0c6"/><rect x="352" y="328" width="8" height="8" fill="#f6e3b8"/><rect x="360" y="328" width="8" height="8" fill="#fcd3a8"/><rect x="368" y="328" width="8" height="8" fill="#fec298"/><rect x="376" y="328" width="8" height="8" fill="#ffb288"/><rect x="384" y="328" width="8" height="8" fill="#ffa479"/><rect x="392" y="328" width="8" height="8" fill="#ff976b"/><rect x="400" y="328" width="8" height="8" fill="#ff8b5d"/><rect x="408" y="328" width="8" height="8" fill="#ff804f"/><rect x="416" y="328" width="8" height="8" fill="#ff7640"/><rect x="424" y="328" width="8" height="8" fill="#ff6c33"/><rect x="432" y="328" width="8" height="8" fill="#ff6226"/><rect x="440" y="328" width="8" height="8" fill="#ff581b"/><rect x="448" y="328" width="8" height="8" fill="#ff4d14"/><rect x="456" y="328" width="8" height="8" fill="#ff4011"/><rect x="464" y="328" width="8" height="8" fill="#ff340e"/><rect x="472" y="328" width="8" height="8" fill="#ff2611"/><rect x="480" y="328" width="8" height="8" fill="#ff1a17"/><rect x="208" y="336" width="8" height="8" fill="#00fef6"/><rect x="216" y="336" width="8" height="8" fill="#00fef7"/><rect x="224" y="336" width="8" height="8" fill="#00fef7"/><rect x="232" y="336" width="8" height="8" fill="#00fef7"/><rect x="240" y="336" width="8" height="8" fill="#00fef7"/><rect x="248" y="336" width="8" height="8" fill="#00fef7"/><rect x="256" y="336" width="8" height="8" fill="#00fdf6"/><rect x="264" y="336" width="8" height="8" fill="#00fdf5"/><rect x="272" y="336" width="8" height="8" fill="#00fdf4"/><rect x="280" y="336" width="8" height="8" fill="#02fdf3"/><rect x="288" y="336" width="8" height="8" fill="#09fcf1"/><rect x="296" y="336" width="8" height="8" fill="#1cfcef"/><rect x="304" y="336" width="8" height="8" fill="#40fbec"/><rect x="312" y="336" width="8" height="8" fill="#6ffbea"/><rect x="320" y="336" width="8" height="8" fill="#9dfae8"/><rect x="328" y="336" width="8" height="8" fill="#c4f7e5"/><rect x="336" y="336" width="8" height="8" fill="#e0f1dd"/><rect x="344" y="336" width="8" height="8" fill="#f1e6d1"/><rect x="352" y="336" width="8" height="8" fill="#fad6c1"/><rect x="360" y="336" width="8" height="8" fill="#fec5b0"/><rect x="368" y="336" width="8" height="8" fill="#ffb49f"/><rect x="376" y="336" width="8" height="8" fill="#ffa490"/><rect x="384" y="336" width="8" height="8" fill="#ff9782"/><rect x="392" y="336" width="8" height="8" fill="#ff8a75"/><rect x="400" y="336" width="8" height="8" fill="#ff7e68"/><rect x="408" y="336" width="8" height="8" fill="#ff735b"/><rect x="416" y="336" width="8" height="8" fill="#ff684f"/><rect x="424" y="336" width="8" height="8" fill="#ff5d42"/><rect x="432" y="336" width="8" height="8" fill="#ff5235"/><rect x="440" y="336" width="8" height="8" fill="#ff4729"/><rect x="448" y="336" width="8" height="8" fill="#ff3b20"/><rect x="456" y="336" width="8" height="8" fill="#ff2f1b"/><rect x="464" y="336" width="8" height="8" fill="#ff211b"/><rect x="472" y="336" width="8" height="8" fill="#ff1521"/><rect x="480" y="336" width="8" height="8" fill="#ff0e25"/><rect x="488" y="336" width="8" height="8" fill="#ff072f"/><rect x="216" y="344" width="8" height="8" fill="#00fdfa"/><rect x="224" y="344" width="8" height="8" fill="#00fcfb"/><rect x="232" y="344" width="8" height="8" fill="#00fcfb"/><rect x="240" y="344" width="8" height="8" fill="#00fbfb"/><rect x="248" y="344" width="8" height="8" fill="#00fbfb"/><rect x="256" y="344" width="8" height="8" fill="#00fafb"/><rect x="264" y="344" width="8" height="8" fill="#00fafa"/><rect x="272" y="344" width="8" height="8" fill="#01f9fa"/><rect x="280" y="344" width="8" height="8" fill="#03f8f9"/><rect x="288" y="344" width="8" height="8" fill="#0df7f8"/><rect x="296" y="344" width="8" height="8" fill="#25f6f7"/><rect x="304" y="344" width="8" height="8" fill="#4df5f6"/><rect x="312" y="344" width="8" height="8" fill="#7ef4f5"/><rect x="320" y="344" width="8" height="8" fill="#abf2f3"/><rect x="328" y="344" width="8" height="8" fill="#cfeeef"/><rect x="336" y="344" width="8" height="8" fill="#e8e6e7"/><rect x="344" y="344" width="8" height="8" fill="#f6d8d9"/><rect x="352" y="344" width="8" height="8" fill="#fcc7c8"/><rect x="360" y="344" width="8" height="8" fill="#feb5b6"/><rect x="368" y="344" width="8" height="8" fill="#ffa5a6"/><rect x="376" y="344" width="8" height="8" fill="#ff9697"/><rect x="384" y="344" width="8" height="8" fill="#ff8889"/><rect x="392" y="344" width="8" height="8" fill="#ff7b7d"/><rect x="400" y="344" width="8" height="8" fill="#ff6f71"/><rect x="408" y="344" width="8" height="8" fill="#ff6366"/><rect x="416" y="344" width="8" height="8" fill="#ff575a"/><rect x="424" y="344" width="8" height="8" fill="#ff4b4f"/><rect x="432" y="344" width="8" height="8" fill="#ff3f43"/><rect x="440" y="344" width="8" height="8" fill="#ff3339"/><rect x="448" y="344" width="8" height="8" fill="#ff2730"/><rect x="456" y="344" width="8" height="8" fill="#ff1c2a"/><rect x="464" y="344" width="8" height="8" fill="#ff132a"/><rect x="472" y="344" width="8" height="8" fill="#ff0b2e"/><rect x="480" y="344" width="8" height="8" fill="#ff0538"/><rect x="488" y="344" width="8" height="8" fill="#ff033c"/><rect x="496" y="344" width="8" height="8" fill="#ff0143"/><rect x="216" y="352" width="8" height="8" fill="#00fafd"/><rect x="224" y="352" width="8" height="8" fill="#00f9fd"/><rect x="232" y="352" width="8" height="8" fill="#00f8fd"/><rect x="240" y="352" width="8" height="8" fill="#00f7fe"/><rect x="248" y="352" width="8" height="8" fill="#00f6fe"/><rect x="256" y="352" width="8" height="8" fill="#00f5fd"/><rect x="264" y="352" width="8" height="8" fill="#00f4fd"/><rect x="272" y="352" width="8" height="8" fill="#01f2fd"/><rect x="280" y="352" width="8" height="8" fill="#05f0fd"/><rect x="288" y="352" width="8" height="8" fill="#12eefd"/><rect x="296" y="352" width="8" height="8" fill="#2eebfc"/><rect x="304" y="352" width="8" height="8" fill="#5ae9fc"/><rect x="312" y="352" width="8" height="8" fill="#8ae8fb"/><rect x="320" y="352" width="8" height="8" fill="#b5e5fa"/><rect x="328" y="352" width="8" height="8" fill="#d6e0f6"/><rect x="336" y="352" width="8" height="8" fill="#ecd7ed"/><rect x="344" y="352" width="8" height="8" fill="#f8c8df"/><rect x="352" y="352" width="8" height="8" fill="#fdb7cd"/><rect x="360" y="352" width="8" height="8" fill="#ffa5bb"/><rect x="368" y="352" width="8" height="8" fill="#ff95ab"/><rect x="376" y="352" width="8" height="8" fill="#ff869d"/><rect x="384" y="352" width="8" height="8" fill="#ff7890"/><rect x="392" y="352" width="8" height="8" fill="#ff6a84"/><rect x="400" y="352" width="8" height="8" fill="#ff5d79"/><rect x="408" y="352" width="8" height="8" fill="#ff506e"/><rect x="416" y="352" width="8" height="8" fill="#ff4364"/><rect x="424" y="352" width="8" height="8" fill="#ff365b"/><rect x="432" y="352" width="8" height="8" fill="#ff2a51"/><rect x="440" y="352" width="8" height="8" fill="#ff1f49"/><rect x="448" y="352" width="8" height="8" fill="#ff1542"/><rect x="456" y="352" width="8" height="8" fill="#ff0e3d"/><rect x="464" y="352" width="8" height="8" fill="#ff083c"/><rect x="472" y="352" width="8" height="8" fill="#ff043e"/><rect x="480" y="352" width="8" height="8" fill="#ff0243"/><rect x="488" y="352" width="8" height="8" fill="#ff0149"/><rect x="496" y="352" width="8" height="8" fill="#ff004b"/><rect x="504" y="352" width="8" height="8" fill="#ff004e"/><rect x="216" y="360" width="8" height="8" fill="#00f5fe"/><rect x="224" y="360" width="8" height="8" fill="#00f4ff"/><rect x="232" y="360" width="8" height="8" fill="#00f2ff"/><rect x="240" y="360" width="8" height="8" fill="#00f1ff"/><rect x="248" y="360" width="8" height="8" fill="#00efff"/><rect x="256" y="360" width="8" height="8" fill="#00edff"/><rect x="264" y="360" width="8" height="8" fill="#00ebff"/><rect x="272" y="360" width="8" height="8" fill="#02e8ff"/><rect x="280" y="360" width="8" height="8" fill="#07e5fe"/><rect x="288" y="360" width="8" height="8" fill="#18e1fe"/><rect x="296" y="360" width="8" height="8" fill="#38ddfe"/><rect x="304" y="360" width="8" height="8" fill="#65dafe"/><rect x="312" y="360" width="8" height="8" fill="#94d7fe"/><rect x="320" y="360" width="8" height="8" fill="#bbd4fd"/><rect x="328" y="360" width="8" height="8" fill="#dacef9"/><rect x="336" y="360" width="8" height="8" fill="#eec4f0"/><rect x="344" y="360" width="8" height="8" fill="#f9b6e2"/><rect x="352" y="360" width="8" height="8" fill="#fea4d1"/><rect x="360" y="360" width="8" height="8" fill="#ff93c0"/><rect x="368" y="360" width="8" height="8" fill="#ff83b0"/><rect x="376" y="360" width="8" height="8" fill="#ff73a2"/><rect x="384" y="360" width="8" height="8" fill="#ff6596"/><rect x="392" y="360" width="8" height="8" fill="#ff568b"/><rect x="400" y="360" width="8" height="8" fill="#ff4880"/><rect x="408" y="360" width="8" height="8" fill="#ff3a77"/><rect x="416" y="360" width="8" height="8" fill="#ff2d6e"/><rect x="424" y="360" width="8" height="8" fill="#ff2166"/><rect x="432" y="360" width="8" height="8" fill="#ff175f"/><rect x="440" y="360" width="8" height="8" fill="#ff0f58"/><rect x="448" y="360" width="8" height="8" fill="#ff0953"/><rect x="456" y="360" width="8" height="8" fill="#ff054f"/><rect x="464" y="360" width="8" height="8" fill="#ff034d"/><rect x="472" y="360" width="8" height="8" fill="#ff014c"/><rect x="480" y="360" width="8" height="8" fill="#ff014d"/><rect x="488" y="360" width="8" height="8" fill="#ff004f"/><rect x="496" y="360" width="8" height="8" fill="#ff0052"/><rect x="504" y="360" width="8" height="8" fill="#ff0051"/><rect x="512" y="360" width="8" height="8" fill="#ff0052"/><rect x="216" y="368" width="8" height="8" fill="#00efff"/><rect x="224" y="368" width="8" height="8" fill="#00edff"/><rect x="232" y="368" width="8" height="8" fill="#00ecff"/><rect x="240" y="368" width="8" height="8" fill="#00eaff"/><rect x="248" y="368" width="8" height="8" fill="#00e8ff"/><rect x="256" y="368" width="8" height="8" fill="#00e5ff"/><rect x="264" y="368" width="8" height="8" fill="#00e1ff"/><rect x="272" y="368" width="8" height="8" fill="#02ddff"/><rect x="280" y="368" width="8" height="8" fill="#0ad8ff"/><rect x="288" y="368" width="8" height="8" fill="#1fd2ff"/><rect x="296" y="368" width="8" height="8" fill="#43cdff"/><rect x="304" y="368" width="8" height="8" fill="#70c9ff"/><rect x="312" y="368" width="8" height="8" fill="#9cc5ff"/><rect x="320" y="368" width="8" height="8" fill="#c0c1fe"/><rect x="328" y="368" width="8" height="8" fill="#dcbafa"/><rect x="336" y="368" width="8" height="8" fill="#efb0f2"/><rect x="344" y="368" width="8" height="8" fill="#faa2e5"/><rect x="352" y="368" width="8" height="8" fill="#fe90d4"/><rect x="360" y="368" width="8" height="8" fill="#ff7fc4"/><rect x="368" y="368" width="8" height="8" fill="#ff6eb5"/><rect x="376" y="368" width="8" height="8" fill="#ff5ea8"/><rect x="384" y="368" width="8" height="8" fill="#ff4e9c"/><rect x="392" y="368" width="8" height="8" fill="#ff3f91"/><rect x="400" y="368" width="8" height="8" fill="#ff3187"/><rect x="408" y="368" width="8" height="8" fill="#ff247f"/><rect x="416" y="368" width="8" height="8" fill="#ff1977"/><rect x="424" y="368" width="8" height="8" fill="#ff1071"/><rect x="432" y="368" width="8" height="8" fill="#ff0a6b"/><rect x="440" y="368" width="8" height="8" fill="#ff0666"/><rect x="448" y="368" width="8" height="8" fill="#ff0362"/><rect x="456" y="368" width="8" height="8" fill="#ff025e"/><rect x="464" y="368" width="8" height="8" fill="#ff015a"/><rect x="472" y="368" width="8" height="8" fill="#ff0058"/><rect x="480" y="368" width="8" height="8" fill="#ff0056"/><rect x="488" y="368" width="8" height="8" fill="#ff0055"/><rect x="496" y="368" width="8" height="8" fill="#ff0054"/><rect x="504" y="368" width="8" height="8" fill="#ff0054"/><rect x="512" y="368" width="8" height="8" fill="#ff0054"/><rect x="216" y="376" width="8" height="8" fill="#00e8ff"/><rect x="224" y="376" width="8" height="8" fill="#00e6ff"/><rect x="232" y="376" width="8" height="8" fill="#00e6ff"/><rect x="240" y="376" width="8" height="8" fill="#00e2ff"/><rect x="248" y="376" width="8" height="8" fill="#00dfff"/><rect x="256" y="376" width="8" height="8" fill="#00dbff"/><rect x="264" y="376" width="8" height="8" fill="#01d7ff"/><rect x="272" y="376" width="8" height="8" fill="#04d1ff"/><rect x="280" y="376" width="8" height="8" fill="#0ecaff"/><rect x="288" y="376" width="8" height="8" fill="#27c3ff"/><rect x="296" y="376" width="8" height="8" fill="#4dbcff"/><rect x="304" y="376" width="8" height="8" fill="#79b7ff"/><rect x="312" y="376" width="8" height="8" fill="#a2b2ff"/><rect x="320" y="376" width="8" height="8" fill="#c4adfe"/><rect x="328" y="376" width="8" height="8" fill="#dea5fb"/><rect x="336" y="376" width="8" height="8" fill="#f09af3"/><rect x="344" y="376" width="8" height="8" fill="#fa8be7"/><rect x="352" y="376" width="8" height="8" fill="#fe7ad7"/><rect x="360" y="376" width="8" height="8" fill="#ff68c8"/><rect x="368" y="376" width="8" height="8" fill="#ff56b9"/><rect x="376" y="376" width="8" height="8" fill="#ff45ad"/><rect x="384" y="376" width="8" height="8" fill="#ff36a1"/><rect x="392" y="376" width="8" height="8" fill="#ff2898"/><rect x="400" y="376" width="8" height="8" fill="#ff1c8f"/><rect x="408" y="376" width="8" height="8" fill="#ff1288"/><rect x="416" y="376" width="8" height="8" fill="#ff0b81"/><rect x="424" y="376" width="8" height="8" fill="#ff067b"/><rect x="432" y="376" width="8" height="8" fill="#ff0376"/><rect x="440" y="376" width="8" height="8" fill="#ff0272"/><rect x="448" y="376" width="8" height="8" fill="#ff016d"/><rect x="456" y="376" width="8" height="8" fill="#ff0069"/><rect x="464" y="376" width="8" height="8" fill="#ff0064"/><rect x="472" y="376" width="8" height="8" fill="#ff005f"/><rect x="480" y="376" width="8" height="8" fill="#ff005b"/><rect x="488" y="376" width="8" height="8" fill="#ff0058"/><rect x="496" y="376" width="8" height="8" fill="#ff0058"/><rect x="504" y="376" width="8" height="8" fill="#ff0057"/><rect x="224" y="384" width="8" height="8" fill="#00dfff"/><rect x="232" y="384" width="8" height="8" fill="#00dcff"/><rect x="240" y="384" width="8" height="8" fill="#00d9ff"/><rect x="248" y="384" width="8" height="8" fill="#00d6ff"/><rect x="256" y="384" width="8" height="8" fill="#00d1ff"/><rect x="264" y="384" width="8" height="8" fill="#01cbff"/><rect x="272" y="384" width="8" height="8" fill="#06c4ff"/><rect x="280" y="384" width="8" height="8" fill="#13bbff"/><rect x="288" y="384" width="8" height="8" fill="#2fb2ff"/><rect x="296" y="384" width="8" height="8" fill="#58aaff"/><rect x="304" y="384" width="8" height="8" fill="#82a4ff"/><rect x="312" y="384" width="8" height="8" fill="#a89eff"/><rect x="320" y="384" width="8" height="8" fill="#c697fe"/><rect x="328" y="384" width="8" height="8" fill="#df8efb"/><rect x="336" y="384" width="8" height="8" fill="#f082f4"/><rect x="344" y="384" width="8" height="8" fill="#fa72e9"/><rect x="352" y="384" width="8" height="8" fill="#fe5fda"/><rect x="360" y="384" width="8" height="8" fill="#ff4dcb"/><rect x="368" y="384" width="8" height="8" fill="#ff3bbe"/><rect x="376" y="384" width="8" height="8" fill="#ff2cb2"/><rect x="384" y="384" width="8" height="8" fill="#ff1fa7"/><rect x="392" y="384" width="8" height="8" fill="#ff149f"/><rect x="400" y="384" width="8" height="8" fill="#ff0c97"/><rect x="408" y="384" width="8" height="8" fill="#ff0790"/><rect x="416" y="384" width="8" height="8" fill="#ff048a"/><rect x="424" y="384" width="8" height="8" fill="#ff0285"/><rect x="432" y="384" width="8" height="8" fill="#ff017f"/><rect x="440" y="384" width="8" height="8" fill="#ff007a"/><rect x="448" y="384" width="8" height="8" fill="#ff0075"/><rect x="456" y="384" width="8" height="8" fill="#ff0070"/><rect x="464" y="384" width="8" height="8" fill="#ff006a"/><rect x="472" y="384" width="8" height="8" fill="#ff0066"/><rect x="480" y="384" width="8" height="8" fill="#ff0061"/><rect x="488" y="384" width="8" height="8" fill="#ff005d"/><rect x="496" y="384" width="8" height="8" fill="#ff005b"/><rect x="224" y="392" width="8" height="8" fill="#00d7ff"/><rect x="232" y="392" width="8" height="8" fill="#00d4ff"/><rect x="240" y="392" width="8" height="8" fill="#00d0ff"/><rect x="248" y="392" width="8" height="8" fill="#00ccff"/><rect x="256" y="392" width="8" height="8" fill="#00c7ff"/><rect x="264" y="392" width="8" height="8" fill="#02bfff"/><rect x="272" y="392" width="8" height="8" fill="#08b6ff"/><rect x="280" y="392" width="8" height="8" fill="#19abff"/><rect x="288" y="392" width="8" height="8" fill="#39a0ff"/><rect x="296" y="392" width="8" height="8" fill="#6298ff"/><rect x="304" y="392" width="8" height="8" fill="#8a90ff"/><rect x="312" y="392" width="8" height="8" fill="#ad88ff"/><rect x="320" y="392" width="8" height="8" fill="#c97ffe"/><rect x="328" y="392" width="8" height="8" fill="#e073fc"/><rect x="336" y="392" width="8" height="8" fill="#f065f5"/><rect x="344" y="392" width="8" height="8" fill="#fa54eb"/><rect x="352" y="392" width="8" height="8" fill="#fe42dd"/><rect x="360" y="392" width="8" height="8" fill="#ff31cf"/><rect x="368" y="392" width="8" height="8" fill="#ff22c2"/><rect x="376" y="392" width="8" height="8" fill="#ff16b7"/><rect x="384" y="392" width="8" height="8" fill="#ff0eae"/><rect x="392" y="392" width="8" height="8" fill="#ff08a6"/><rect x="400" y="392" width="8" height="8" fill="#ff049e"/><rect x="408" y="392" width="8" height="8" fill="#ff0298"/><rect x="416" y="392" width="8" height="8" fill="#ff0192"/><rect x="424" y="392" width="8" height="8" fill="#ff008c"/><rect x="432" y="392" width="8" height="8" fill="#ff0086"/><rect x="440" y="392" width="8" height="8" fill="#ff0080"/><rect x="448" y="392" width="8" height="8" fill="#ff007a"/><rect x="456" y="392" width="8" height="8" fill="#ff0076"/><rect x="464" y="392" width="8" height="8" fill="#ff0070"/><rect x="472" y="392" width="8" height="8" fill="#ff006b"/><rect x="480" y="392" width="8" height="8" fill="#ff0066"/><rect x="488" y="392" width="8" height="8" fill="#ff0061"/><rect x="224" y="400" width="8" height="8" fill="#00ceff"/><rect x="232" y="400" width="8" height="8" fill="#00cbff"/><rect x="240" y="400" width="8" height="8" fill="#00c8ff"/><rect x="248" y="400" width="8" height="8" fill="#00c2ff"/><rect x="256" y="400" width="8" height="8" fill="#01bbff"/><rect x="264" y="400" width="8" height="8" fill="#03b2ff"/><rect x="272" y="400" width="8" height="8" fill="#0ca6ff"/><rect x="280" y="400" width="8" height="8" fill="#2099ff"/><rect x="288" y="400" width="8" height="8" fill="#438dff"/><rect x="296" y="400" width="8" height="8" fill="#6b83ff"/><rect x="304" y="400" width="8" height="8" fill="#9179ff"/><rect x="312" y="400" width="8" height="8" fill="#b16fff"/><rect x="320" y="400" width="8" height="8" fill="#cb63fe"/><rect x="328" y="400" width="8" height="8" fill="#e155fc"/><rect x="336" y="400" width="8" height="8" fill="#f046f6"/><rect x="344" y="400" width="8" height="8" fill="#fa36ed"/><rect x="352" y="400" width="8" height="8" fill="#fe26e0"/><rect x="360" y="400" width="8" height="8" fill="#ff19d3"/><rect x="368" y="400" width="8" height="8" fill="#ff10c7"/><rect x="376" y="400" width="8" height="8" fill="#ff09bd"/><rect x="384" y="400" width="8" height="8" fill="#ff05b4"/><rect x="392" y="400" width="8" height="8" fill="#ff03ac"/><rect x="400" y="400" width="8" height="8" fill="#ff01a5"/><rect x="408" y="400" width="8" height="8" fill="#ff019e"/><rect x="416" y="400" width="8" height="8" fill="#ff0098"/><rect x="424" y="400" width="8" height="8" fill="#ff0091"/><rect x="432" y="400" width="8" height="8" fill="#ff008c"/><rect x="440" y="400" width="8" height="8" fill="#ff0086"/><rect x="448" y="400" width="8" height="8" fill="#ff0080"/><rect x="456" y="400" width="8" height="8" fill="#ff007a"/><rect x="464" y="400" width="8" height="8" fill="#ff0075"/><rect x="232" y="408" width="8" height="8" fill="#00c1ff"/><rect x="240" y="408" width="8" height="8" fill="#00bcff"/><rect x="248" y="408" width="8" height="8" fill="#00b6ff"/><rect x="256" y="408" width="8" height="8" fill="#01aeff"/><rect x="264" y="408" width="8" height="8" fill="#05a3ff"/><rect x="272" y="408" width="8" height="8" fill="#1095ff"/><rect x="280" y="408" width="8" height="8" fill="#2886ff"/><rect x="288" y="408" width="8" height="8" fill="#4d78ff"/><rect x="296" y="408" width="8" height="8" fill="#746bff"/><rect x="304" y="408" width="8" height="8" fill="#985fff"/><rect x="312" y="408" width="8" height="8" fill="#b552ff"/><rect x="320" y="408" width="8" height="8" fill="#cd44fe"/><rect x="328" y="408" width="8" height="8" fill="#e236fc"/><rect x="336" y="408" width="8" height="8" fill="#f128f7"/><rect x="344" y="408" width="8" height="8" fill="#fa1cef"/><rect x="352" y="408" width="8" height="8" fill="#fe12e3"/><rect x="360" y="408" width="8" height="8" fill="#ff0bd7"/><rect x="368" y="408" width="8" height="8" fill="#ff06cc"/><rect x="376" y="408" width="8" height="8" fill="#ff03c2"/><rect x="384" y="408" width="8" height="8" fill="#ff01b9"/><rect x="392" y="408" width="8" height="8" fill="#ff01b1"/><rect x="400" y="408" width="8" height="8" fill="#ff00aa"/><rect x="408" y="408" width="8" height="8" fill="#ff00a2"/><rect x="416" y="408" width="8" height="8" fill="#ff009c"/><rect x="424" y="408" width="8" height="8" fill="#ff0096"/><rect x="432" y="408" width="8" height="8" fill="#ff0090"/><rect x="440" y="408" width="8" height="8" fill="#ff008a"/><rect x="448" y="408" width="8" height="8" fill="#ff0084"/><rect x="232" y="416" width="8" height="8" fill="#00b6ff"/><rect x="240" y="416" width="8" height="8" fill="#00b0ff"/><rect x="248" y="416" width="8" height="8" fill="#01a7ff"/><rect x="256" y="416" width="8" height="8" fill="#029fff"/><rect x="264" y="416" width="8" height="8" fill="#0791ff"/><rect x="272" y="416" width="8" height="8" fill="#1681ff"/><rect x="280" y="416" width="8" height="8" fill="#316fff"/><rect x="288" y="416" width="8" height="8" fill="#575eff"/><rect x="296" y="416" width="8" height="8" fill="#7d50ff"/><rect x="304" y="416" width="8" height="8" fill="#9d42ff"/><rect x="312" y="416" width="8" height="8" fill="#b935ff"/><rect x="320" y="416" width="8" height="8" fill="#cf28ff"/><rect x="328" y="416" width="8" height="8" fill="#e31cfd"/><rect x="336" y="416" width="8" height="8" fill="#f113f9"/><rect x="344" y="416" width="8" height="8" fill="#fa0cf1"/><rect x="352" y="416" width="8" height="8" fill="#fd07e6"/><rect x="360" y="416" width="8" height="8" fill="#ff04db"/><rect x="368" y="416" width="8" height="8" fill="#ff02d0"/><rect x="376" y="416" width="8" height="8" fill="#ff01c7"/><rect x="384" y="416" width="8" height="8" fill="#ff00be"/><rect x="392" y="416" width="8" height="8" fill="#ff00b6"/><rect x="400" y="416" width="8" height="8" fill="#ff00ae"/><rect x="408" y="416" width="8" height="8" fill="#ff00a7"/><rect x="416" y="416" width="8" height="8" fill="#ff00a1"/><rect x="424" y="416" width="8" height="8" fill="#ff009a"/><rect x="432" y="416" width="8" height="8" fill="#ff0094"/><rect x="232" y="424" width="8" height="8" fill="#00a9ff"/><rect x="240" y="424" width="8" height="8" fill="#00a2ff"/><rect x="248" y="424" width="8" height="8" fill="#019bff"/><rect x="256" y="424" width="8" height="8" fill="#048cff"/><rect x="264" y="424" width="8" height="8" fill="#0c7cff"/><rect x="272" y="424" width="8" height="8" fill="#1e69ff"/><rect x="280" y="424" width="8" height="8" fill="#3c55ff"/><rect x="288" y="424" width="8" height="8" fill="#6143ff"/><rect x="296" y="424" width="8" height="8" fill="#8534ff"/><rect x="304" y="424" width="8" height="8" fill="#a327ff"/><rect x="312" y="424" width="8" height="8" fill="#bc1cff"/><rect x="320" y="424" width="8" height="8" fill="#d113ff"/><rect x="328" y="424" width="8" height="8" fill="#e30cfd"/><rect x="336" y="424" width="8" height="8" fill="#f107fa"/><rect x="344" y="424" width="8" height="8" fill="#f904f3"/><rect x="352" y="424" width="8" height="8" fill="#fd02e9"/><rect x="360" y="424" width="8" height="8" fill="#ff01df"/><rect x="368" y="424" width="8" height="8" fill="#ff01d4"/><rect x="376" y="424" width="8" height="8" fill="#ff00cd"/><rect x="384" y="424" width="8" height="8" fill="#ff00c2"/><rect x="392" y="424" width="8" height="8" fill="#ff00ba"/><rect x="400" y="424" width="8" height="8" fill="#ff00b2"/><rect x="408" y="424" width="8" height="8" fill="#ff00ab"/><rect x="240" y="432" width="8" height="8" fill="#0191ff"/><rect x="248" y="432" width="8" height="8" fill="#0386ff"/><rect x="256" y="432" width="8" height="8" fill="#0975ff"/><rect x="264" y="432" width="8" height="8" fill="#1363ff"/><rect x="272" y="432" width="8" height="8" fill="#294eff"/><rect x="280" y="432" width="8" height="8" fill="#4839ff"/><rect x="288" y="432" width="8" height="8" fill="#6c28ff"/><rect x="296" y="432" width="8" height="8" fill="#8d1cff"/><rect x="304" y="432" width="8" height="8" fill="#a913ff"/><rect x="312" y="432" width="8" height="8" fill="#bf0cff"/><rect x="320" y="432" width="8" height="8" fill="#d207ff"/><rect x="328" y="432" width="8" height="8" fill="#e304fe"/><rect x="336" y="432" width="8" height="8" fill="#f002fb"/><rect x="344" y="432" width="8" height="8" fill="#f801f5"/><rect x="352" y="432" width="8" height="8" fill="#fd01ed"/><rect x="360" y="432" width="8" height="8" fill="#fe01e6"/><rect x="368" y="432" width="8" height="8" fill="#ff00d9"/><rect x="376" y="432" width="8" height="8" fill="#ff00cf"/><rect x="384" y="432" width="8" height="8" fill="#ff00c6"/><rect x="392" y="432" width="8" height="8" fill="#ff00be"/><rect x="240" y="440" width="8" height="8" fill="#037eff"/><rect x="248" y="440" width="8" height="8" fill="#076fff"/><rect x="256" y="440" width="8" height="8" fill="#115eff"/><rect x="264" y="440" width="8" height="8" fill="#1f48ff"/><rect x="272" y="440" width="8" height="8" fill="#3833ff"/><rect x="280" y="440" width="8" height="8" fill="#5721ff"/><rect x="288" y="440" width="8" height="8" fill="#7714ff"/><rect x="296" y="440" width="8" height="8" fill="#940cff"/><rect x="304" y="440" width="8" height="8" fill="#ac07ff"/><rect x="312" y="440" width="8" height="8" fill="#c004ff"/><rect x="320" y="440" width="8" height="8" fill="#d202ff"/><rect x="328" y="440" width="8" height="8" fill="#e101fe"/><rect x="336" y="440" width="8" height="8" fill="#ed01fc"/><rect x="344" y="440" width="8" height="8" fill="#f700f8"/><rect x="352" y="440" width="8" height="8" fill="#fc00f0"/><rect x="360" y="440" width="8" height="8" fill="#fe00e7"/><rect x="368" y="440" width="8" height="8" fill="#ff00dd"/><rect x="376" y="440" width="8" height="8" fill="#ff00d3"/><rect x="248" y="448" width="8" height="8" fill="#0f56ff"/><rect x="256" y="448" width="8" height="8" fill="#1c42ff"/><rect x="264" y="448" width="8" height="8" fill="#332dff"/><rect x="272" y="448" width="8" height="8" fill="#491dff"/><rect x="280" y="448" width="8" height="8" fill="#6511ff"/><rect x="288" y="448" width="8" height="8" fill="#8109ff"/><rect x="296" y="448" width="8" height="8" fill="#9905ff"/><rect x="304" y="448" width="8" height="8" fill="#ad03ff"/><rect x="312" y="448" width="8" height="8" fill="#bf02ff"/><rect x="320" y="448" width="8" height="8" fill="#cc01ff"/><rect x="328" y="448" width="8" height="8" fill="#de00ff"/><rect x="336" y="448" width="8" height="8" fill="#eb00fd"/><rect x="344" y="448" width="8" height="8" fill="#f500fa"/><rect x="352" y="448" width="8" height="8" fill="#fb00f3"/><rect x="360" y="448" width="8" height="8" fill="#fe00eb"/><rect x="256" y="456" width="8" height="8" fill="#2d2bff"/><rect x="264" y="456" width="8" height="8" fill="#421bff"/><rect x="272" y="456" width="8" height="8" fill="#5b10ff"/><rect x="280" y="456" width="8" height="8" fill="#7208ff"/><rect x="288" y="456" width="8" height="8" fill="#8604ff"/><rect x="296" y="456" width="8" height="8" fill="#9902ff"/><rect x="304" y="456" width="8" height="8" fill="#a702ff"/><rect x="312" y="456" width="8" height="8" fill="#bd00ff"/><rect x="320" y="456" width="8" height="8" fill="#cd00ff"/><rect x="328" y="456" width="8" height="8" fill="#db00ff"/><rect x="336" y="456" width="8" height="8" fill="#e700fe"/><rect x="264" y="464" width="8" height="8" fill="#540eff"/><rect x="272" y="464" width="8" height="8" fill="#6807ff"/><rect x="280" y="464" width="8" height="8" fill="#7a04ff"/><rect x="288" y="464" width="8" height="8" fill="#8b01ff"/><rect x="296" y="464" width="8" height="8" fill="#9b01ff"/><rect x="304" y="464" width="8" height="8" fill="#ab00ff"/><rect x="312" y="464" width="8" height="8" fill="#ba00ff"/><rect x="320" y="464" width="8" height="8" fill="#c900ff"/><rect x="272" y="472" width="8" height="8" fill="#7303ff"/><rect x="280" y="472" width="8" height="8" fill="#8101ff"/><rect x="288" y="472" width="8" height="8" fill="#8e01ff"/><rect x="296" y="472" width="8" height="8" fill="#9a00ff"/><rect x="304" y="472" width="8" height="8" fill="#a800ff"/></g></g>
<path d="M284.61,466.41L283.09,469.45M284.57,466.40L283.05,469.44M284.49,466.43L282.97,469.47M284.40,466.42L282.88,469.47M284.31,466.47L282.79,469.51M284.19,466.48L282.67,469.52M284.02,466.47L282.50,469.51M283.83,466.46L282.31,469.50M283.56,466.36L282.04,469.40M283.05,466.06L281.15,468.88M282.46,465.63L280.41,468.34M281.66,465.00L279.48,467.61M280.69,464.16L278.48,466.74M279.42,463.10L277.25,465.72M277.69,461.67L275.53,464.30M275.48,459.83L273.24,462.39M272.71,457.25L267.94,461.96M269.37,453.48L266.68,455.55M264.91,446.88L261.99,448.62M259.24,436.24L256.17,437.69M252.13,419.50L245.89,421.93M243.36,394.69L240.11,395.69M234.31,360.34L230.99,361.09M225.80,317.45L222.45,318.00M219.87,271.64L213.19,272.23M218.20,229.19L214.80,229.10M222.10,194.32L218.79,193.54M231.93,171.51L229.26,169.40M246.19,163.29L245.31,156.64M262.01,166.09L263.15,162.89M277.84,173.54L279.45,170.55M292.67,182.39L294.52,179.54M306.95,192.36L310.94,186.97M320.99,203.30L323.13,200.66M334.89,214.96L337.11,212.39M348.76,227.15L351.03,224.61M362.62,239.67L367.13,234.72M376.43,252.35L378.73,249.86M390.12,265.05L392.44,262.57M403.57,277.61L405.89,275.13M416.64,289.85L421.21,284.95M429.15,301.55L431.47,299.06M440.92,312.54L443.24,310.06M451.68,322.63L454.01,320.15M461.02,331.37L465.60,326.47M469.24,339.04L471.56,336.56M476.03,345.37L478.35,342.88M481.58,350.56L483.90,348.08M486.00,354.71L490.58,349.82M489.53,358.00L491.85,355.51M492.36,360.65L494.69,358.16M494.73,362.87L497.06,360.39M496.67,364.68L499.00,362.20M498.22,366.13L500.54,363.65M499.37,367.20L501.69,364.72M500.25,368.03L502.58,365.56M500.91,368.65L503.24,366.17M501.34,369.06L503.67,366.58M501.70,369.39L504.02,366.91M501.98,369.65L504.30,367.17M502.25,369.91L504.57,367.43M502.49,370.14L504.82,367.66M502.62,370.26L504.95,367.78M502.70,370.33L505.03,367.86M502.74,370.37L505.07,367.89" stroke="#000" stroke-width="1.1" fill="none"/>
<foreignObject x="0" y="0" width="719" height="517"><canvas id="cv" width="719" height="517"></canvas></foreignObject>
<path d="M284.97,465.69 L284.96,465.69 L284.95,465.69 L284.95,465.69 L284.94,465.69 L284.93,465.69 L284.91,465.69 L284.90,465.70 L284.88,465.71 L284.87,465.71 L284.85,465.71 L284.83,465.71 L284.81,465.70 L284.79,465.70 L284.77,465.70 L284.75,465.71 L284.74,465.72 L284.72,465.73 L284.70,465.74 L284.68,465.75 L284.67,465.75 L284.65,465.76 L284.63,465.76 L284.61,465.76 L284.58,465.76 L284.55,465.76 L284.51,465.76 L284.48,465.76 L284.44,465.75 L284.41,465.75 L284.37,465.75 L284.34,465.76 L284.30,465.75 L284.26,465.75 L284.22,465.75 L284.18,465.74 L284.14,465.73 L284.10,465.72 L284.05,465.70 L283.99,465.68 L283.92,465.64 L283.84,465.60 L283.76,465.56 L283.67,465.51 L283.58,465.45 L283.49,465.39 L283.39,465.33 L283.29,465.25 L283.18,465.17 L283.07,465.08 L282.94,464.99 L282.80,464.89 L282.66,464.77 L282.50,464.65 L282.34,464.52 L282.17,464.39 L282.00,464.24 L281.82,464.08 L281.62,463.91 L281.42,463.73 L281.21,463.55 L280.98,463.36 L280.74,463.16 L280.49,462.94 L280.22,462.72 L279.93,462.48 L279.62,462.23 L279.29,461.96 L278.95,461.67 L278.58,461.37 L278.20,461.06 L277.80,460.73 L277.38,460.38 L276.94,460.02 L276.48,459.64 L276.01,459.22 L275.51,458.78 L274.98,458.31 L274.43,457.81 L273.87,457.27 L273.28,456.69 L272.68,456.08 L272.06,455.41 L271.41,454.69 L270.73,453.89 L270.01,452.99 L269.23,451.96 L268.41,450.81 L267.52,449.51 L266.58,448.06 L265.60,446.47 L264.57,444.72 L263.50,442.82 L262.38,440.72 L261.20,438.43 L259.97,435.90 L258.68,433.12 L257.33,430.07 L255.91,426.74 L254.43,423.12 L252.88,419.21 L251.24,414.98 L249.54,410.42 L247.77,405.48 L245.96,400.17 L244.12,394.46 L242.30,388.36 L240.48,381.89 L238.68,375.03 L236.89,367.79 L235.09,360.16 L233.29,352.15 L231.53,343.81 L229.81,335.19 L228.15,326.34 L226.59,317.32 L225.14,308.20 L223.80,299.03 L222.61,289.84 L221.56,280.67 L220.67,271.57 L219.94,262.60 L219.39,253.85 L219.04,245.36 L218.91,237.15 L219.00,229.21 L219.30,221.54 L219.83,214.18 L220.60,207.19 L221.61,200.61 L222.87,194.51 L224.38,188.89 L226.12,183.79 L228.07,179.25 L230.22,175.32 L232.56,172.01 L235.06,169.32 L237.72,167.22 L240.49,165.67 L243.35,164.64 L246.29,164.08 L249.30,163.97 L252.35,164.27 L255.45,164.88 L258.58,165.76 L261.74,166.84 L264.91,168.09 L268.09,169.49 L271.25,171.00 L274.37,172.60 L277.45,174.25 L280.48,175.93 L283.47,177.65 L286.42,179.41 L289.34,181.21 L292.24,183.07 L295.12,184.97 L297.98,186.91 L300.82,188.90 L303.66,190.93 L306.48,193.00 L309.29,195.11 L312.10,197.26 L314.90,199.45 L317.70,201.67 L320.49,203.92 L323.27,206.20 L326.05,208.50 L328.83,210.84 L331.60,213.19 L334.37,215.57 L337.14,217.97 L339.92,220.39 L342.69,222.83 L345.46,225.28 L348.23,227.75 L351.00,230.23 L353.77,232.72 L356.54,235.23 L359.31,237.74 L362.08,240.26 L364.84,242.79 L367.61,245.32 L370.37,247.86 L373.13,250.40 L375.89,252.94 L378.64,255.49 L381.38,258.03 L384.12,260.57 L386.85,263.11 L389.57,265.64 L392.29,268.17 L394.99,270.69 L397.68,273.20 L400.36,275.71 L403.03,278.20 L405.67,280.68 L408.31,283.14 L410.92,285.59 L413.52,288.02 L416.09,290.43 L418.64,292.82 L421.17,295.18 L423.68,297.53 L426.15,299.84 L428.60,302.13 L431.02,304.39 L433.41,306.62 L435.77,308.82 L438.09,310.99 L440.37,313.12 L442.62,315.23 L444.83,317.30 L446.99,319.32 L449.09,321.30 L451.14,323.21 L453.11,325.07 L455.03,326.86 L456.89,328.60 L458.70,330.29 L460.48,331.95 L462.21,333.58 L463.91,335.16 L465.56,336.70 L467.16,338.19 L468.69,339.63 L470.16,341.00 L471.57,342.31 L472.93,343.57 L474.23,344.79 L475.48,345.95 L476.69,347.08 L477.85,348.16 L478.95,349.20 L480.02,350.19 L481.03,351.14 L482.00,352.05 L482.93,352.92 L483.81,353.75 L484.65,354.54 L485.46,355.29 L486.23,356.01 L486.96,356.70 L487.67,357.36 L488.34,357.98 L488.98,358.58 L489.60,359.16 L490.19,359.71 L490.75,360.23 L491.29,360.74 L491.82,361.23 L492.33,361.71 L492.82,362.17 L493.29,362.61 L493.75,363.04 L494.19,363.45 L494.61,363.84 L495.01,364.22 L495.40,364.59 L495.77,364.93 L496.13,365.27 L496.47,365.59 L496.79,365.89 L497.10,366.18 L497.40,366.46 L497.67,366.72 L497.93,366.96 L498.18,367.19 L498.40,367.40 L498.62,367.60 L498.82,367.79 L499.02,367.97 L499.20,368.15 L499.38,368.31 L499.55,368.47 L499.71,368.62 L499.85,368.76 L500.00,368.89 L500.13,369.01 L500.25,369.13 L500.36,369.24 L500.47,369.33 L500.56,369.42 L500.64,369.50 L500.72,369.57 L500.80,369.64 L500.87,369.71 L500.94,369.78 L501.01,369.85 L501.08,369.91 L501.15,369.97 L501.21,370.03 L501.27,370.08 L501.32,370.14 L501.38,370.19 L501.43,370.24 L501.48,370.29 L501.54,370.34 L501.59,370.39 L501.65,370.44 L501.70,370.49 L501.75,370.54 L501.80,370.59 L501.85,370.63 L501.90,370.68 L501.94,370.72 L501.98,370.75 L502.01,370.78 L502.04,370.81 L502.06,370.83 L502.08,370.84 L502.09,370.86 L502.11,370.88 L502.13,370.89 L502.14,370.91 L502.15,370.92 L502.17,370.93 L502.18,370.94 L502.19,370.95 L502.19,370.95 L502.19,370.95" stroke="#000" stroke-width="1.7" fill="none" stroke-linejoin="round"/>
<path d="M442.44,337.62 L345.05,262.19 L276.87,425.69 Z" stroke="#000" stroke-width="1.8" fill="none" stroke-dasharray="6.4 1.6 1.5 1.6" stroke-dashoffset="0"/>
<circle cx="337.19" cy="347.18" r="3.3" stroke="#111" stroke-width="1.3" fill="none"/>
<path d="M217.5,139.99V467.5H527.5" stroke="#000" stroke-width="1.6" fill="none"/>
<path d="M217.50,467.50V471.00M236.88,467.50V471.00M256.25,467.50V471.00M275.62,467.50V471.00M295.00,467.50V471.00M314.38,467.50V471.00M333.75,467.50V471.00M353.12,467.50V471.00M372.50,467.50V471.00M391.88,467.50V471.00M411.25,467.50V471.00M430.62,467.50V471.00M450.00,467.50V471.00M469.38,467.50V471.00M488.75,467.50V471.00M508.12,467.50V471.00M527.50,467.50V471.00M217.50,467.50H214.00M217.50,449.31H214.00M217.50,431.11H214.00M217.50,412.91H214.00M217.50,394.72H214.00M217.50,376.52H214.00M217.50,358.33H214.00M217.50,340.13H214.00M217.50,321.94H214.00M217.50,303.75H214.00M217.50,285.55H214.00M217.50,267.36H214.00M217.50,249.16H214.00M217.50,230.97H214.00M217.50,212.77H214.00M217.50,194.58H214.00M217.50,176.38H214.00M217.50,158.19H214.00M217.50,139.99H214.00" stroke="#000" stroke-width="1.6" fill="none"/>
<g font-family="Liberation Serif" font-size="14.6" fill="#000" stroke="#000" stroke-width="0.2">
<text x="217.50" y="482.20" text-anchor="middle">0.0</text>
<text x="256.25" y="482.20" text-anchor="middle">0.1</text>
<text x="295.00" y="482.20" text-anchor="middle">0.2</text>
<text x="333.75" y="482.20" text-anchor="middle">0.3</text>
<text x="372.50" y="482.20" text-anchor="middle">0.4</text>
<text x="411.25" y="482.20" text-anchor="middle">0.5</text>
<text x="450.00" y="482.20" text-anchor="middle">0.6</text>
<text x="488.75" y="482.20" text-anchor="middle">0.7</text>
<text x="527.50" y="482.20" text-anchor="middle">0.8</text>
<text x="211.50" y="472.50" text-anchor="end">0.0</text>
<text x="211.50" y="436.11" text-anchor="end">0.1</text>
<text x="211.50" y="399.72" text-anchor="end">0.2</text>
<text x="211.50" y="363.33" text-anchor="end">0.3</text>
<text x="211.50" y="326.94" text-anchor="end">0.4</text>
<text x="211.50" y="290.55" text-anchor="end">0.5</text>
<text x="211.50" y="254.16" text-anchor="end">0.6</text>
<text x="211.50" y="217.77" text-anchor="end">0.7</text>
<text x="211.50" y="181.38" text-anchor="end">0.8</text>
<text x="211.50" y="144.99" text-anchor="end">0.9</text>
<text x="372.2" y="496.2" font-style="italic" font-size="13" stroke-width="0.15" text-anchor="middle">x</text>
<text x="184.2" y="307.6" font-style="italic" font-size="13" stroke-width="0.15" text-anchor="middle">y</text>
</g>
<g font-family="Liberation Serif" font-size="14.6" fill="#0000ff" stroke="#0000ff" stroke-width="0.12" text-anchor="middle">
<text x="256.00" y="467.30">460</text>
<text x="233.40" y="426.90">480</text>
<text x="200.80" y="277.00">500</text>
<text x="244.60" y="156.80">520</text>
<text x="323.00" y="187.00">540</text>
<text x="379.30" y="234.60">560</text>
<text x="433.50" y="285.00">580</text>
<text x="477.40" y="326.50">600</text>
<text x="502.50" y="350.00">620</text>
</g>
</svg>
<script>
(function(){
var loc=[[284.97, 465.69], [284.96, 465.69], [284.95, 465.69], [284.95, 465.69], [284.94, 465.69], [284.93, 465.69], [284.91, 465.69], [284.9, 465.7], [284.88, 465.71], [284.87, 465.71], [284.85, 465.71], [284.83, 465.71], [284.81, 465.7], [284.79, 465.7], [284.77, 465.7], [284.75, 465.71], [284.74, 465.72], [284.72, 465.73], [284.7, 465.74], [284.68, 465.75], [284.67, 465.75], [284.65, 465.76], [284.63, 465.76], [284.61, 465.76], [284.58, 465.76], [284.55, 465.76], [284.51, 465.76], [284.48, 465.76], [284.44, 465.75], [284.41, 465.75], [284.37, 465.75], [284.34, 465.76], [284.3, 465.75], [284.26, 465.75], [284.22, 465.75], [284.18, 465.74], [284.14, 465.73], [284.1, 465.72], [284.05, 465.7], [283.99, 465.68], [283.92, 465.64], [283.84, 465.6], [283.76, 465.56], [283.67, 465.51], [283.58, 465.45], [283.49, 465.39], [283.39, 465.33], [283.29, 465.25], [283.18, 465.17], [283.07, 465.08], [282.94, 464.99], [282.8, 464.89], [282.66, 464.77], [282.5, 464.65], [282.34, 464.52], [282.17, 464.39], [282.0, 464.24], [281.82, 464.08], [281.62, 463.91], [281.42, 463.73], [281.21, 463.55], [280.98, 463.36], [280.74, 463.16], [280.49, 462.94], [280.22, 462.72], [279.93, 462.48], [279.62, 462.23], [279.29, 461.96], [278.95, 461.67], [278.58, 461.37], [278.2, 461.06], [277.8, 460.73], [277.38, 460.38], [276.94, 460.02], [276.48, 459.64], [276.01, 459.22], [275.51, 458.78], [274.98, 458.31], [274.43, 457.81], [273.87, 457.27], [273.28, 456.69], [272.68, 456.08], [272.06, 455.41], [271.41, 454.69], [270.73, 453.89], [270.01, 452.99], [269.23, 451.96], [268.41, 450.81], [267.52, 449.51], [266.58, 448.06], [265.6, 446.47], [264.57, 444.72], [263.5, 442.82], [262.38, 440.72], [261.2, 438.43], [259.97, 435.9], [258.68, 433.12], [257.33, 430.07], [255.91, 426.74], [254.43, 423.12], [252.88, 419.21], [251.24, 414.98], [249.54, 410.42], [247.77, 405.48], [245.96, 400.17], [244.12, 394.46], [242.3, 388.36], [240.48, 381.89], [238.68, 375.03], [236.89, 367.79], [235.09, 360.16], [233.29, 352.15], [231.53, 343.81], [229.81, 335.19], [228.15, 326.34], [226.59, 317.32], [225.14, 308.2], [223.8, 299.03], [222.61, 289.84], [221.56, 280.67], [220.67, 271.57], [219.94, 262.6], [219.39, 253.85], [219.04, 245.36], [218.91, 237.15], [219.0, 229.21], [219.3, 221.54], [219.83, 214.18], [220.6, 207.19], [221.61, 200.61], [222.87, 194.51], [224.38, 188.89], [226.12, 183.79], [228.07, 179.25], [230.22, 175.32], [232.56, 172.01], [235.06, 169.32], [237.72, 167.22], [240.49, 165.67], [243.35, 164.64], [246.29, 164.08], [249.3, 163.97], [252.35, 164.27], [255.45, 164.88], [258.58, 165.76], [261.74, 166.84], [264.91, 168.09], [268.09, 169.49], [271.25, 171.0], [274.37, 172.6], [277.45, 174.25], [280.48, 175.93], [283.47, 177.65], [286.42, 179.41], [289.34, 181.21], [292.24, 183.07], [295.12, 184.97], [297.98, 186.91], [300.82, 188.9], [303.66, 190.93], [306.48, 193.0], [309.29, 195.11], [312.1, 197.26], [314.9, 199.45], [317.7, 201.67], [320.49, 203.92], [323.27, 206.2], [326.05, 208.5], [328.83, 210.84], [331.6, 213.19], [334.37, 215.57], [337.14, 217.97], [339.92, 220.39], [342.69, 222.83], [345.46, 225.28], [348.23, 227.75], [351.0, 230.23], [353.77, 232.72], [356.54, 235.23], [359.31, 237.74], [362.08, 240.26], [364.84, 242.79], [367.61, 245.32], [370.37, 247.86], [373.13, 250.4], [375.89, 252.94], [378.64, 255.49], [381.38, 258.03], [384.12, 260.57], [386.85, 263.11], [389.57, 265.64], [392.29, 268.17], [394.99, 270.69], [397.68, 273.2], [400.36, 275.71], [403.03, 278.2], [405.67, 280.68], [408.31, 283.14], [410.92, 285.59], [413.52, 288.02], [416.09, 290.43], [418.64, 292.82], [421.17, 295.18], [423.68, 297.53], [426.15, 299.84], [428.6, 302.13], [431.02, 304.39], [433.41, 306.62], [435.77, 308.82], [438.09, 310.99], [440.37, 313.12], [442.62, 315.23], [444.83, 317.3], [446.99, 319.32], [449.09, 321.3], [451.14, 323.21], [453.11, 325.07], [455.03, 326.86], [456.89, 328.6], [458.7, 330.29], [460.48, 331.95], [462.21, 333.58], [463.91, 335.16], [465.56, 336.7], [467.16, 338.19], [468.69, 339.63], [470.16, 341.0], [471.57, 342.31], [472.93, 343.57], [474.23, 344.79], [475.48, 345.95], [476.69, 347.08], [477.85, 348.16], [478.95, 349.2], [480.02, 350.19], [481.03, 351.14], [482.0, 352.05], [482.93, 352.92], [483.81, 353.75], [484.65, 354.54], [485.46, 355.29], [486.23, 356.01], [486.96, 356.7], [487.67, 357.36], [488.34, 357.98], [488.98, 358.58], [489.6, 359.16], [490.19, 359.71], [490.75, 360.23], [491.29, 360.74], [491.82, 361.23], [492.33, 361.71], [492.82, 362.17], [493.29, 362.61], [493.75, 363.04], [494.19, 363.45], [494.61, 363.84], [495.01, 364.22], [495.4, 364.59], [495.77, 364.93], [496.13, 365.27], [496.47, 365.59], [496.79, 365.89], [497.1, 366.18], [497.4, 366.46], [497.67, 366.72], [497.93, 366.96], [498.18, 367.19], [498.4, 367.4], [498.62, 367.6], [498.82, 367.79], [499.02, 367.97], [499.2, 368.15], [499.38, 368.31], [499.55, 368.47], [499.71, 368.62], [499.85, 368.76], [500.0, 368.89], [500.13, 369.01], [500.25, 369.13], [500.36, 369.24], [500.47, 369.33], [500.56, 369.42], [500.64, 369.5], [500.72, 369.57], [500.8, 369.64], [500.87, 369.71], [500.94, 369.78], [501.01, 369.85], [501.08, 369.91], [501.15, 369.97], [501.21, 370.03], [501.27, 370.08], [501.32, 370.14], [501.38, 370.19], [501.43, 370.24], [501.48, 370.29], [501.54, 370.34], [501.59, 370.39], [501.65, 370.44], [501.7, 370.49], [501.75, 370.54], [501.8, 370.59], [501.85, 370.63], [501.9, 370.68], [501.94, 370.72], [501.98, 370.75], [502.01, 370.78], [502.04, 370.81], [502.06, 370.83], [502.08, 370.84], [502.09, 370.86], [502.11, 370.88], [502.13, 370.89], [502.14, 370.91], [502.15, 370.92], [502.17, 370.93], [502.18, 370.94], [502.19, 370.95], [502.19, 370.95], [502.19, 370.95]];
var cv=document.getElementById('cv');var ctx=cv.getContext('2d');
var BX=200,BY=125,BW=330,BH=360,SIG=11;
var mc=document.createElement('canvas');mc.width=BW;mc.height=BH;var mx=mc.getContext('2d');
mx.beginPath();mx.moveTo(loc[0][0]-BX,loc[0][1]-BY);for(var i=1;i<loc.length;i++)mx.lineTo(loc[i][0]-BX,loc[i][1]-BY);mx.closePath();mx.fillStyle='#000';mx.fill();
var md=mx.getImageData(0,0,BW,BH).data;
var N=BW*BH;var R=new Float32Array(N),G=new Float32Array(N),B=new Float32Array(N),A=new Float32Array(N);
function gm(c){c=Math.max(0,Math.min(1,c));return c<=0.0031308?12.92*c:1.055*Math.pow(c,1/2.4)-0.055;}
for(var py=0;py<BH;py++){for(var px=0;px<BW;px++){
 var k=py*BW+px;var a=md[k*4+3]/255;A[k]=a;if(a<=0)continue;
 var x=(px+BX+0.5-217.5)/387.5;var y=(467.5-(py+BY+0.5))/363.9;
 if(y<0.001)y=0.001;
 var X=x/y,Y=1,Z=(1-x-y)/y;
 var r=3.2404542*X-1.5371385*Y-0.4985314*Z;
 var g=-0.9692660*X+1.8760108*Y+0.0415560*Z;
 var b=0.0556434*X-0.2040259*Y+1.0572252*Z;
 var mn=Math.min(r,g,b,0);r-=mn;g-=mn;b-=mn;
 var m=Math.max(r,g,b);if(m>0){r/=m;g/=m;b/=m;}
 R[k]=gm(r)*a;G[k]=gm(g)*a;B[k]=gm(b)*a;
}}
function box(arr,rad){var tmp=new Float32Array(N);var w=2*rad+1;
 for(var y=0;y<BH;y++){var s=0;var o=y*BW;for(var x=-rad;x<=rad;x++){s+=arr[o+Math.max(0,Math.min(BW-1,x))];}
  for(var x=0;x<BW;x++){tmp[o+x]=s/w;var xa=Math.min(BW-1,x+rad+1),xr=Math.max(0,x-rad);s+=arr[o+xa]-arr[o+xr];}}
 for(var x=0;x<BW;x++){var s=0;for(var y=-rad;y<=rad;y++){s+=tmp[Math.max(0,Math.min(BH-1,y))*BW+x];}
  for(var y=0;y<BH;y++){arr[y*BW+x]=s/w;var ya=Math.min(BH-1,y+rad+1),yr=Math.max(0,y-rad);s+=tmp[ya*BW+x]-tmp[yr*BW+x];}}
}
var rad=Math.max(1,Math.round(Math.sqrt(SIG*SIG+1)-0.5));
if(SIG>0){for(var p=0;p<3;p++){var rr=Math.round((Math.sqrt(4*SIG*SIG+1)-1)/2);rr=Math.max(1,rr);box(R,rr);box(G,rr);box(B,rr);box(A,rr);}}
var img=ctx.createImageData(BW,BH);var d=img.data;
for(var k=0;k<N;k++){var a=A[k];if(a<1e-4){continue;}d[k*4]=Math.round(R[k]/a*255);d[k*4+1]=Math.round(G[k]/a*255);d[k*4+2]=Math.round(B[k]/a*255);d[k*4+3]=255;}
var tc=document.createElement('canvas');tc.width=BW;tc.height=BH;tc.getContext('2d').putImageData(img,0,0);
ctx.save();ctx.beginPath();ctx.moveTo(loc[0][0],loc[0][1]);for(var i=1;i<loc.length;i++)ctx.lineTo(loc[i][0],loc[i][1]);ctx.closePath();ctx.clip();
ctx.drawImage(tc,BX,BY);ctx.restore();
})();
</script>
</body></html>
